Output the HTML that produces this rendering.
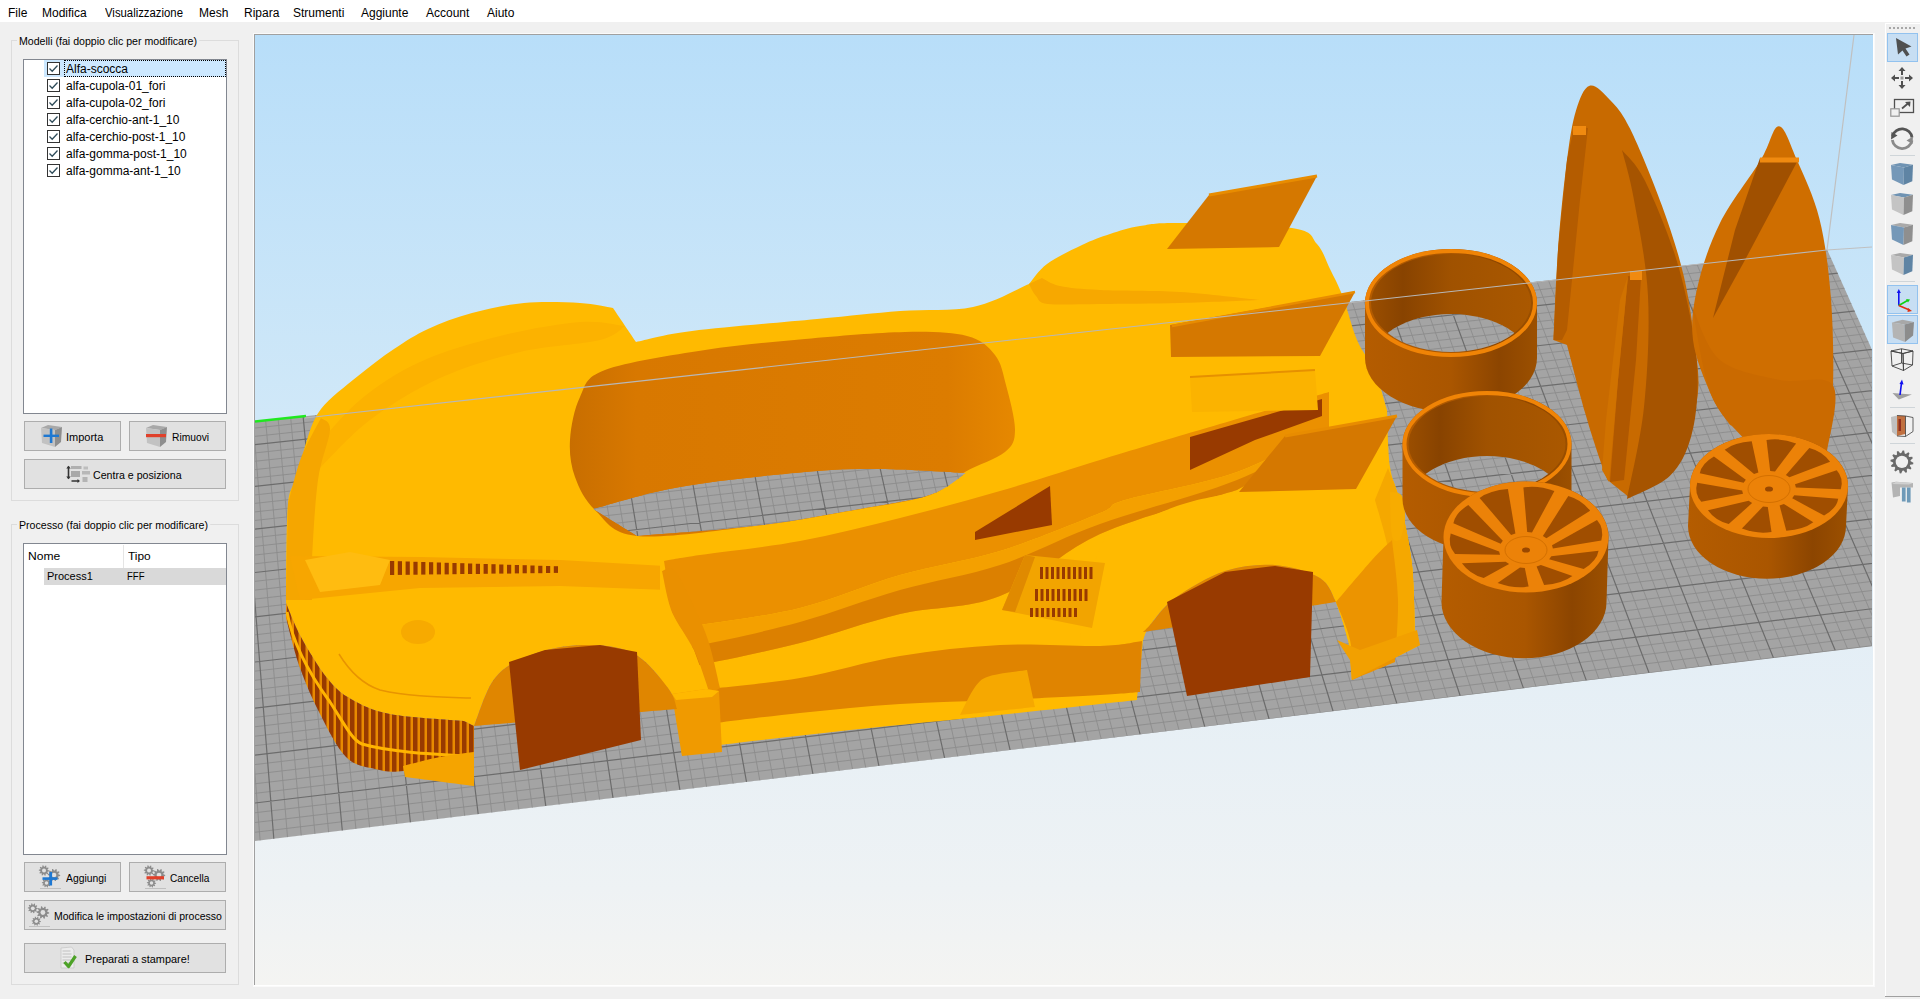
<!DOCTYPE html>
<html><head><meta charset="utf-8">
<style>
*{box-sizing:border-box}
html,body{margin:0;padding:0}
body{width:1920px;height:999px;overflow:hidden;background:#f0f0f0;position:relative;font-family:"Liberation Sans",sans-serif;font-size:12px;color:#000}
.a{position:absolute}
.t{position:absolute;white-space:nowrap;line-height:14px;transform-origin:0 0}
#menu{left:0;top:0;width:1920px;height:22px;background:#fff}
.grp{position:absolute;border:1px solid #dcdcdc}
.lbl{position:absolute;background:#f0f0f0;padding:0 2px;white-space:nowrap;line-height:14px;transform-origin:0 50%}
.lst{position:absolute;background:#fff;border:1px solid #828790}
.btn{position:absolute;background:#e1e1e1;border:1px solid #adadad}
.cb{position:absolute;width:13px;height:13px;border:1px solid #333;background:#fff}
.cb svg{position:absolute;left:0;top:0}
.tb{position:absolute;left:1887px;width:31px;height:29px}
.tbsel{background:#c7def3;border:1px solid #92c2ef}
</style></head><body>
<div id="menu" class="a">
<span class="t" style="left:8px;top:6px">File</span>
<span class="t" style="left:42px;top:6px">Modifica</span>
<span class="t" style="left:105px;top:6px;transform:scaleX(0.945)">Visualizzazione</span>
<span class="t" style="left:199px;top:6px">Mesh</span>
<span class="t" style="left:244px;top:6px">Ripara</span>
<span class="t" style="left:293px;top:6px">Strumenti</span>
<span class="t" style="left:361px;top:6px">Aggiunte</span>
<span class="t" style="left:426px;top:6px">Account</span>
<span class="t" style="left:487px;top:6px">Aiuto</span>
</div>

<!-- group 1 -->
<div class="grp" style="left:11px;top:40px;width:228px;height:461px"></div>
<div class="lbl" style="left:17px;top:34px;font-size:11px;transform:scaleX(0.964)">Modelli (fai doppio clic per modificare)</div>
<div class="lst" style="left:23px;top:59px;width:204px;height:355px">
  <div class="a" style="left:20px;top:0px;width:182px;height:17px;background:#cce8ff"></div>
  <div class="a" style="left:40px;top:0px;width:162px;height:17px;border:1px dotted #000"></div>
</div>
<div class="cb" style="left:47px;top:62px"><svg width="11" height="11"><path d="M1.5 5.5L4.2 8.2L9.5 2.5" stroke="#2f4c5a" stroke-width="1.3" fill="none"/></svg></div>
<span class="t" style="left:66px;top:62px">Alfa-scocca</span>
<div class="cb" style="left:47px;top:79px"><svg width="11" height="11"><path d="M1.5 5.5L4.2 8.2L9.5 2.5" stroke="#2f4c5a" stroke-width="1.3" fill="none"/></svg></div>
<span class="t" style="left:66px;top:79px">alfa-cupola-01_fori</span>
<div class="cb" style="left:47px;top:96px"><svg width="11" height="11"><path d="M1.5 5.5L4.2 8.2L9.5 2.5" stroke="#2f4c5a" stroke-width="1.3" fill="none"/></svg></div>
<span class="t" style="left:66px;top:96px">alfa-cupola-02_fori</span>
<div class="cb" style="left:47px;top:113px"><svg width="11" height="11"><path d="M1.5 5.5L4.2 8.2L9.5 2.5" stroke="#2f4c5a" stroke-width="1.3" fill="none"/></svg></div>
<span class="t" style="left:66px;top:113px">alfa-cerchio-ant-1_10</span>
<div class="cb" style="left:47px;top:130px"><svg width="11" height="11"><path d="M1.5 5.5L4.2 8.2L9.5 2.5" stroke="#2f4c5a" stroke-width="1.3" fill="none"/></svg></div>
<span class="t" style="left:66px;top:130px">alfa-cerchio-post-1_10</span>
<div class="cb" style="left:47px;top:147px"><svg width="11" height="11"><path d="M1.5 5.5L4.2 8.2L9.5 2.5" stroke="#2f4c5a" stroke-width="1.3" fill="none"/></svg></div>
<span class="t" style="left:66px;top:147px">alfa-gomma-post-1_10</span>
<div class="cb" style="left:47px;top:164px"><svg width="11" height="11"><path d="M1.5 5.5L4.2 8.2L9.5 2.5" stroke="#2f4c5a" stroke-width="1.3" fill="none"/></svg></div>
<span class="t" style="left:66px;top:164px">alfa-gomma-ant-1_10</span>
<div class="btn" style="left:24px;top:421px;width:97px;height:30px"></div>
<div class="btn" style="left:129px;top:421px;width:97px;height:30px"></div>
<div class="btn" style="left:24px;top:459px;width:202px;height:30px"></div>
<span class="t" style="left:66px;top:430px;font-size:11px">Importa</span>
<span class="t" style="left:172px;top:430px;font-size:11px;transform:scaleX(0.934)">Rimuovi</span>
<span class="t" style="left:93px;top:468px;font-size:11px;transform:scaleX(0.966)">Centra e posiziona</span>
<svg class="a" style="left:38px;top:424px" width="26" height="26" viewBox="38 424 26 26"><polygon points="41,428 48,425 62,427 55,430" fill="#a8a8a8"/><polygon points="41,428 55,430 55,447 42,443" fill="#c2c2c2"/><polygon points="55,430 62,427 61,442 55,447" fill="#8e8e8e"/><rect x="49.8" y="428.5" width="2.6" height="14.5" fill="#1e78d2"/><rect x="43.5" y="434.6" width="15.5" height="2.4" fill="#1e78d2"/></svg>
<svg class="a" style="left:143px;top:424px" width="26" height="26" viewBox="143 424 26 26"><polygon points="146,428 153,425 167,427 160,430" fill="#a8a8a8"/><polygon points="146,428 160,430 160,447 147,443" fill="#c2c2c2"/><polygon points="160,430 167,427 166,442 160,447" fill="#8e8e8e"/><rect x="146" y="434" width="20" height="3.2" fill="#e0402a"/></svg>
<svg class="a" style="left:66px;top:465px" width="26" height="20" viewBox="66 465 26 20"><path d="M68.5 466.5L68.5 478.5" stroke="#333" stroke-width="1.6"/><path d="M66.3 468.5L68.5 465.8L70.7 468.5ZM66.3 476.5L68.5 479.2L70.7 476.5Z" fill="#333"/><rect x="71" y="466" width="10.5" height="3" fill="#b0b0b0"/><rect x="83.5" y="466.5" width="4.5" height="3" fill="#bdbdbd"/><rect x="71" y="471" width="9" height="6" fill="#a8a8a8"/><rect x="82" y="471" width="8" height="3.5" fill="#b8b8b8"/><rect x="82.5" y="477" width="5" height="5" fill="#b4b4b4"/><path d="M71.5 481L78 481" stroke="#333" stroke-width="1.5"/><path d="M77.5 479L80 481L77.5 483Z" fill="#333"/></svg>

<!-- group 2 -->
<div class="grp" style="left:11px;top:524px;width:228px;height:461px"></div>
<div class="lbl" style="left:17px;top:518px;font-size:11px;transform:scaleX(0.966)">Processo (fai doppio clic per modificare)</div>
<div class="lst" style="left:23px;top:543px;width:204px;height:312px">
  <div class="a" style="left:99px;top:1px;width:1px;height:23px;background:#e5e5e5"></div>
  <div class="a" style="left:20px;top:24px;width:182px;height:17px;background:#d9d9d9"></div>
</div>
<span class="t" style="left:28px;top:549px;font-size:11px;transform:scaleX(1.1)">Nome</span>
<span class="t" style="left:128px;top:549px;font-size:11px;transform:scaleX(1.08)">Tipo</span>
<span class="t" style="left:47px;top:569px;font-size:11px">Process1</span>
<span class="t" style="left:127px;top:569px;font-size:11px;transform:scaleX(0.87)">FFF</span>
<div class="btn" style="left:24px;top:862px;width:97px;height:30px"></div>
<div class="btn" style="left:129px;top:862px;width:97px;height:30px"></div>
<div class="btn" style="left:24px;top:900px;width:202px;height:30px"></div>
<div class="btn" style="left:24px;top:943px;width:202px;height:30px"></div>
<span class="t" style="left:66px;top:871px;font-size:11px;transform:scaleX(0.94)">Aggiungi</span>
<span class="t" style="left:170px;top:871px;font-size:11px;transform:scaleX(0.92)">Cancella</span>
<span class="t" style="left:54px;top:909px;font-size:11px;transform:scaleX(0.953)">Modifica le impostazioni di processo</span>
<span class="t" style="left:85px;top:952px;font-size:11px;transform:scaleX(0.99)">Preparati a stampare!</span>
<svg class="a" style="left:38px;top:864px" width="26" height="26" viewBox="38 864 26 26"><polygon points="49.20,870.50 49.14,871.31 47.56,871.66 47.34,872.20 48.21,873.56 47.68,874.18 46.20,873.53 45.70,873.84 45.61,875.45 44.81,875.64 44.00,874.24 43.41,874.20 42.39,875.45 41.64,875.13 41.80,873.53 41.35,873.15 39.79,873.56 39.37,872.86 40.44,871.66 40.30,871.09 38.80,870.50 38.86,869.69 40.44,869.34 40.66,868.80 39.79,867.44 40.32,866.82 41.80,867.47 42.30,867.16 42.39,865.55 43.19,865.36 44.00,866.76 44.59,866.80 45.61,865.55 46.36,865.87 46.20,867.47 46.65,867.85 48.21,867.44 48.63,868.14 47.56,869.34 47.70,869.91" fill="#8c8c8c"/><circle cx="44" cy="870.5" r="1.98" fill="#e1e1e1"/><polygon points="60.20,875.00 60.12,875.97 58.25,876.38 57.98,877.03 59.02,878.64 58.38,879.38 56.62,878.61 56.03,878.98 55.92,880.90 54.97,881.12 54.00,879.46 53.30,879.41 52.08,880.90 51.19,880.52 51.38,878.61 50.84,878.16 48.98,878.64 48.48,877.81 49.75,876.38 49.59,875.70 47.80,875.00 47.88,874.03 49.75,873.62 50.02,872.97 48.98,871.36 49.62,870.62 51.38,871.39 51.97,871.02 52.08,869.10 53.03,868.88 54.00,870.54 54.70,870.59 55.92,869.10 56.81,869.48 56.62,871.39 57.16,871.84 59.02,871.36 59.52,872.19 58.25,873.62 58.41,874.30" fill="#8c8c8c"/><circle cx="54" cy="875" r="2.36" fill="#e1e1e1"/><polygon points="51.10,883.00 51.04,883.72 49.65,884.02 49.45,884.50 50.22,885.70 49.75,886.25 48.45,885.68 48.00,885.95 47.92,887.37 47.22,887.54 46.50,886.31 45.98,886.27 45.08,887.37 44.41,887.10 44.55,885.68 44.16,885.34 42.78,885.70 42.40,885.09 43.35,884.02 43.23,883.52 41.90,883.00 41.96,882.28 43.35,881.98 43.55,881.50 42.78,880.30 43.25,879.75 44.55,880.32 45.00,880.05 45.08,878.63 45.78,878.46 46.50,879.69 47.02,879.73 47.92,878.63 48.59,878.90 48.45,880.32 48.84,880.66 50.22,880.30 50.60,880.91 49.65,881.98 49.77,882.48" fill="#8c8c8c"/><circle cx="46.5" cy="883" r="1.75" fill="#e1e1e1"/><path d="M40 888.5L61 888.5" stroke="#b8b8b8" stroke-width="0.8"/><rect x="49.3" y="872" width="2.8" height="13.5" fill="#1e78d2"/><rect x="42.5" y="877.3" width="15" height="2.6" fill="#1e78d2"/></svg>
<svg class="a" style="left:143px;top:864px" width="26" height="26" viewBox="143 864 26 26"><polygon points="154.20,870.50 154.14,871.31 152.56,871.66 152.34,872.20 153.21,873.56 152.68,874.18 151.20,873.53 150.70,873.84 150.61,875.45 149.81,875.64 149.00,874.24 148.41,874.20 147.39,875.45 146.64,875.13 146.80,873.53 146.35,873.15 144.79,873.56 144.37,872.86 145.44,871.66 145.30,871.09 143.80,870.50 143.86,869.69 145.44,869.34 145.66,868.80 144.79,867.44 145.32,866.82 146.80,867.47 147.30,867.16 147.39,865.55 148.19,865.36 149.00,866.76 149.59,866.80 150.61,865.55 151.36,865.87 151.20,867.47 151.65,867.85 153.21,867.44 153.63,868.14 152.56,869.34 152.70,869.91" fill="#8c8c8c"/><circle cx="149" cy="870.5" r="1.98" fill="#e1e1e1"/><polygon points="165.20,875.00 165.12,875.97 163.25,876.38 162.98,877.03 164.02,878.64 163.38,879.38 161.62,878.61 161.03,878.98 160.92,880.90 159.97,881.12 159.00,879.46 158.30,879.41 157.08,880.90 156.19,880.52 156.38,878.61 155.84,878.16 153.98,878.64 153.48,877.81 154.75,876.38 154.59,875.70 152.80,875.00 152.88,874.03 154.75,873.62 155.02,872.97 153.98,871.36 154.62,870.62 156.38,871.39 156.97,871.02 157.08,869.10 158.03,868.88 159.00,870.54 159.70,870.59 160.92,869.10 161.81,869.48 161.62,871.39 162.16,871.84 164.02,871.36 164.52,872.19 163.25,873.62 163.41,874.30" fill="#8c8c8c"/><circle cx="159" cy="875" r="2.36" fill="#e1e1e1"/><polygon points="156.10,883.00 156.04,883.72 154.65,884.02 154.45,884.50 155.22,885.70 154.75,886.25 153.45,885.68 153.00,885.95 152.92,887.37 152.22,887.54 151.50,886.31 150.98,886.27 150.08,887.37 149.41,887.10 149.55,885.68 149.16,885.34 147.78,885.70 147.40,885.09 148.35,884.02 148.23,883.52 146.90,883.00 146.96,882.28 148.35,881.98 148.55,881.50 147.78,880.30 148.25,879.75 149.55,880.32 150.00,880.05 150.08,878.63 150.78,878.46 151.50,879.69 152.02,879.73 152.92,878.63 153.59,878.90 153.45,880.32 153.84,880.66 155.22,880.30 155.60,880.91 154.65,881.98 154.77,882.48" fill="#8c8c8c"/><circle cx="151.5" cy="883" r="1.75" fill="#e1e1e1"/><path d="M145 888.5L166 888.5" stroke="#b8b8b8" stroke-width="0.8"/><rect x="146.5" y="876.2" width="17.5" height="3.2" fill="#e0402a"/></svg>
<svg class="a" style="left:27px;top:902px" width="26" height="26" viewBox="27 902 26 26"><polygon points="37.80,908.30 37.74,909.08 36.22,909.41 36.01,909.93 36.85,911.24 36.34,911.84 34.92,911.21 34.43,911.51 34.35,913.06 33.58,913.24 32.80,911.90 32.24,911.86 31.25,913.06 30.53,912.76 30.68,911.21 30.25,910.85 28.75,911.24 28.34,910.57 29.38,909.41 29.24,908.86 27.80,908.30 27.86,907.52 29.38,907.19 29.59,906.67 28.75,905.36 29.26,904.76 30.68,905.39 31.17,905.09 31.25,903.54 32.02,903.36 32.80,904.70 33.36,904.74 34.35,903.54 35.07,903.84 34.92,905.39 35.35,905.75 36.85,905.36 37.26,906.03 36.22,907.19 36.36,907.74" fill="#8c8c8c"/><circle cx="32.8" cy="908.3" r="1.90" fill="#e1e1e1"/><polygon points="49.20,912.50 49.12,913.49 47.21,913.90 46.94,914.56 48.00,916.20 47.35,916.95 45.57,916.17 44.96,916.54 44.85,918.49 43.89,918.72 42.90,917.04 42.19,916.98 40.95,918.49 40.04,918.11 40.23,916.17 39.69,915.71 37.80,916.20 37.29,915.36 38.59,913.90 38.42,913.21 36.60,912.50 36.68,911.51 38.59,911.10 38.86,910.44 37.80,908.80 38.45,908.05 40.23,908.83 40.84,908.46 40.95,906.51 41.91,906.28 42.90,907.96 43.61,908.02 44.85,906.51 45.76,906.89 45.57,908.83 46.11,909.29 48.00,908.80 48.51,909.64 47.21,911.10 47.38,911.79" fill="#8c8c8c"/><circle cx="42.9" cy="912.5" r="2.39" fill="#e1e1e1"/><polygon points="40.90,921.20 40.84,921.92 39.45,922.22 39.25,922.70 40.02,923.90 39.55,924.45 38.25,923.88 37.80,924.15 37.72,925.57 37.02,925.74 36.30,924.51 35.78,924.47 34.88,925.57 34.21,925.30 34.35,923.88 33.96,923.54 32.58,923.90 32.20,923.29 33.15,922.22 33.03,921.72 31.70,921.20 31.76,920.48 33.15,920.18 33.35,919.70 32.58,918.50 33.05,917.95 34.35,918.52 34.80,918.25 34.88,916.83 35.58,916.66 36.30,917.89 36.82,917.93 37.72,916.83 38.39,917.10 38.25,918.52 38.64,918.86 40.02,918.50 40.40,919.11 39.45,920.18 39.57,920.68" fill="#8c8c8c"/><circle cx="36.3" cy="921.2" r="1.75" fill="#e1e1e1"/><path d="M29 926.5L50 926.5" stroke="#b8b8b8" stroke-width="0.8"/></svg>
<svg class="a" style="left:58px;top:944px" width="26" height="28" viewBox="58 944 26 28"><path d="M61 948L71.5 947L74 950L74 968L61 968Z" fill="#ececec" stroke="#c8c8c8" stroke-width="0.8"/><path d="M62.5 951h8M62.5 954h9M62.5 957h9M62.5 960h9M62.5 963h7" stroke="#c0c0c0" stroke-width="1"/><path d="M64.5 962L68.5 966.5L75.5 956" stroke="#4da228" stroke-width="3.2" fill="none" stroke-linejoin="round"/></svg>

<!-- viewport -->
<div class="a" style="left:253px;top:33px;width:1622px;height:954px;background:#fafafa"></div>
<div class="a" style="left:254px;top:34px;width:1620px;height:952px;background:#fff"></div>
<div class="a" style="left:254px;top:34px;width:1619px;height:951px;background:#a0a0a0"></div>
<svg class="a" style="left:255px;top:35px" width="1618" height="950" viewBox="255 35 1618 950">
<defs>
<linearGradient id="sky" x1="0" y1="35" x2="0" y2="984" gradientUnits="userSpaceOnUse">
<stop offset="0" stop-color="#b8def9"/>
<stop offset="0.40" stop-color="#d0e8f8"/>
<stop offset="0.62" stop-color="#e3eef6"/>
<stop offset="0.9" stop-color="#eef2f4"/>
<stop offset="1" stop-color="#f4f4f2"/>
</linearGradient>
<clipPath id="plat"><path d="M255 421.7L1827.2 249.8L1872 349.7L1872 646.2L255 841Z"/></clipPath>
<linearGradient id="cyl" x1="0" y1="0" x2="1" y2="0">
<stop offset="0" stop-color="#b45c00"/><stop offset="0.5" stop-color="#aa5600"/><stop offset="0.78" stop-color="#8c4500"/><stop offset="1" stop-color="#9c5000"/>
</linearGradient>
<linearGradient id="cylin" x1="0" y1="0" x2="1" y2="0">
<stop offset="0" stop-color="#9a4e00"/><stop offset="0.2" stop-color="#884300"/><stop offset="0.5" stop-color="#a05200"/><stop offset="1" stop-color="#aa5800"/>
</linearGradient>
<linearGradient id="cockpit" x1="570" y1="0" x2="1015" y2="0" gradientUnits="userSpaceOnUse">
<stop offset="0" stop-color="#c86e00"/><stop offset="0.15" stop-color="#d87800"/><stop offset="0.85" stop-color="#dc7c00"/><stop offset="1" stop-color="#e68800"/>
</linearGradient>
</defs>
<rect x="255" y="35" width="1618" height="950" fill="url(#sky)"/>
<path d="M255 421.7L1827.2 249.8L1872 349.7L1872 646.2L255 841Z" fill="#a4a4a4"/>
<g clip-path="url(#plat)" fill="none"><path d="M218.9 846.5L189.6 418.7M232.7 844.8L202.1 417.3M246.5 843.2L214.7 416.0M260.2 841.5L227.2 414.6M287.6 838.2L252.3 412.0M301.3 836.5L264.8 410.6M315.0 834.8L277.3 409.3M328.7 833.2L289.8 407.9M356.0 829.8L314.7 405.3M369.7 828.2L327.2 403.9M383.3 826.5L339.6 402.6M396.9 824.9L352.0 401.3M424.1 821.6L376.9 398.6M437.7 819.9L389.3 397.3M451.2 818.3L401.7 395.9M464.8 816.6L414.1 394.6M491.9 813.3L438.8 392.0M505.4 811.7L451.2 390.6M518.9 810.1L463.5 389.3M532.4 808.4L475.8 388.0M559.3 805.2L500.5 385.4M572.8 803.5L512.8 384.0M586.2 801.9L525.1 382.7M599.7 800.3L537.3 381.4M626.5 797.0L561.9 378.8M639.9 795.4L574.1 377.5M653.3 793.7L586.4 376.1M666.7 792.1L598.6 374.8M693.4 788.9L623.0 372.2M706.7 787.3L635.2 370.9M720.0 785.6L647.4 369.6M733.3 784.0L659.6 368.3M759.9 780.8L684.0 365.7M773.2 779.2L696.1 364.4M786.5 777.6L708.3 363.1M799.7 776.0L720.4 361.8M826.2 772.7L744.6 359.2M839.4 771.1L756.7 357.9M852.6 769.5L768.8 356.6M865.8 767.9L780.9 355.3M892.2 764.7L805.0 352.7M905.3 763.1L817.1 351.4M918.5 761.5L829.1 350.1M931.6 759.9L841.2 348.8M957.8 756.8L865.2 346.3M970.9 755.2L877.2 345.0M984.0 753.6L889.2 343.7M997.1 752.0L901.2 342.4M1023.2 748.8L925.1 339.8M1036.3 747.2L937.1 338.5M1049.3 745.6L949.0 337.3M1062.3 744.1L961.0 336.0M1088.3 740.9L984.8 333.4M1101.3 739.3L996.7 332.2M1114.3 737.8L1008.6 330.9M1127.2 736.2L1020.5 329.6M1153.1 733.0L1044.3 327.1M1166.0 731.5L1056.1 325.8M1179.0 729.9L1068.0 324.5M1191.9 728.3L1079.8 323.3M1217.6 725.2L1103.5 320.7M1230.5 723.6L1115.3 319.4M1243.4 722.1L1127.1 318.2M1256.2 720.5L1138.9 316.9M1281.9 717.4L1162.4 314.4M1294.7 715.8L1174.2 313.1M1307.5 714.3L1186.0 311.9M1320.3 712.7L1197.7 310.6M1345.8 709.6L1221.2 308.1M1358.6 708.1L1232.9 306.8M1371.3 706.5L1244.6 305.6M1384.1 705.0L1256.3 304.3M1409.5 701.9L1279.7 301.8M1422.2 700.4L1291.3 300.6M1434.9 698.8L1303.0 299.3M1447.6 697.3L1314.6 298.1M1472.9 694.2L1337.9 295.6M1485.6 692.7L1349.5 294.3M1498.2 691.1L1361.2 293.1M1510.8 689.6L1372.8 291.8M1536.0 686.5L1395.9 289.4M1548.6 685.0L1407.5 288.1M1561.2 683.5L1419.1 286.9M1573.8 681.9L1430.6 285.6M1598.9 678.9L1453.7 283.2M1611.4 677.4L1465.3 281.9M1623.9 675.9L1476.8 280.7M1636.4 674.3L1488.3 279.5M1661.4 671.3L1511.3 277.0M1673.9 669.8L1522.8 275.8M1686.4 668.3L1534.3 274.5M1698.9 666.8L1545.7 273.3M1723.7 663.7L1568.6 270.9M1736.2 662.2L1580.1 269.6M1748.6 660.7L1591.5 268.4M1761.0 659.2L1602.9 267.2M1785.8 656.2L1625.8 264.7M1798.2 654.7L1637.2 263.5M1810.5 653.2L1648.5 262.3M1822.9 651.7L1659.9 261.1M1847.5 648.7L1682.6 258.6M1859.9 647.2L1694.0 257.4M1872.2 645.7L1705.3 256.2M1884.5 644.2L1716.7 255.0M1909.0 641.2L1739.3 252.6M1921.3 639.7L1750.6 251.3M1933.6 638.2L1761.9 250.1M1945.8 636.8L1773.2 248.9M1970.3 633.8L1795.7 246.5M1982.5 632.3L1807.0 245.3M1994.7 630.8L1818.3 244.1M2006.9 629.3L1829.5 242.9M205.2 848.2L2019.1 627.9M204.5 838.4L2015.0 619.1M203.9 828.7L2011.0 610.4M203.2 819.0L2007.0 601.7M202.0 799.7L1999.0 584.4M201.3 790.2L1995.0 575.8M200.7 780.6L1991.1 567.2M200.1 771.1L1987.1 558.7M198.9 752.3L1979.3 541.7M198.2 742.9L1975.4 533.3M197.6 733.5L1971.5 524.9M197.0 724.2L1967.6 516.5M195.8 705.7L1959.9 499.8M195.2 696.5L1956.1 491.5M194.6 687.3L1952.3 483.3M194.0 678.2L1948.5 475.1M192.8 660.1L1941.0 458.7M192.2 651.0L1937.2 450.6M191.6 642.1L1933.5 442.5M191.0 633.1L1929.7 434.4M189.8 615.3L1922.3 418.3M189.3 606.5L1918.6 410.3M188.7 597.6L1915.0 402.4M188.1 588.9L1911.3 394.5M187.0 571.4L1904.0 378.7M186.4 562.7L1900.4 370.8M185.8 554.1L1896.8 363.0M185.3 545.4L1893.2 355.2M184.1 528.3L1886.0 339.7M183.6 519.8L1882.5 332.0M183.0 511.3L1878.9 324.4M182.5 502.9L1875.4 316.7M181.3 486.0L1868.4 301.5M180.8 477.7L1864.9 293.9M180.3 469.4L1861.4 286.4M179.7 461.1L1857.9 278.9M178.6 444.6L1851.0 263.9M178.1 436.3L1847.6 256.5M177.5 428.2L1844.1 249.1M177.0 420.0L1840.7 241.7" stroke="#8c8c8c" stroke-width="0.9"/><path d="M205.2 848.2L177.0 420.0M273.9 839.8L239.8 413.3M342.4 831.5L302.2 406.6M410.5 823.2L364.5 399.9M478.3 815.0L426.4 393.3M545.9 806.8L488.2 386.7M613.1 798.6L549.6 380.1M680.0 790.5L610.8 373.5M746.6 782.4L671.8 367.0M813.0 774.4L732.5 360.5M879.0 766.3L793.0 354.0M944.7 758.3L853.2 347.5M1010.2 750.4L913.2 341.1M1075.3 742.5L972.9 334.7M1140.2 734.6L1032.4 328.3M1204.8 726.8L1091.6 322.0M1269.1 719.0L1150.7 315.7M1333.1 711.2L1209.4 309.4M1396.8 703.4L1268.0 303.1M1460.2 695.7L1326.3 296.8M1523.4 688.1L1384.4 290.6M1586.3 680.4L1442.2 284.4M1649.0 672.8L1499.8 278.2M1711.3 665.2L1557.2 272.1M1773.4 657.7L1614.4 266.0M1835.2 650.2L1671.3 259.8M1896.8 642.7L1728.0 253.8M1958.1 635.3L1784.5 247.7M2019.1 627.9L1840.7 241.7M202.6 809.3L2003.0 593.0M199.5 761.7L1983.2 550.2M196.4 714.9L1963.8 508.1M193.4 669.1L1944.7 466.9M190.4 624.2L1926.0 426.3M187.5 580.1L1907.6 386.6M184.7 536.9L1889.6 347.5M181.9 494.4L1871.9 309.1M179.2 452.8L1854.4 271.4" stroke="#6c6c6c" stroke-width="1.2"/></g>
<path d="M1827 250L1854 35M1827 250L1872 247" stroke="#c0c0c0" stroke-width="1.2" fill="none"/>
<path d="M255 421.5L306 416" stroke="#1fe81f" stroke-width="2.5" fill="none"/>
<path fill="#ffba00" d="M286.0 600.0C286.3 584.0 286.0 524.5 288.0 504.0C290.0 483.5 295.0 487.2 298.0 477.0C301.0 466.8 302.2 454.3 306.0 443.0C309.8 431.7 312.3 420.2 321.0 409.0C329.7 397.8 345.8 386.0 358.0 376.0C370.2 366.0 382.3 356.8 394.0 349.0C405.7 341.2 415.0 335.0 428.0 329.0C441.0 323.0 456.0 317.3 472.0 313.0C488.0 308.7 506.0 304.7 524.0 303.0C542.0 301.3 565.2 302.2 580.0 303.0C594.8 303.8 607.5 307.2 613.0 308.0C616.8 313.7 632.2 336.3 636.0 342.0C645.3 340.2 661.8 334.8 692.0 331.0C722.2 327.2 782.3 322.3 817.0 319.0C851.7 315.7 874.0 313.0 900.0 311.0C926.0 309.0 951.5 311.5 973.0 307.0C994.5 302.5 1019.7 287.8 1029.0 284.0C1032.0 280.7 1038.2 270.5 1047.0 264.0C1055.8 257.5 1071.5 250.0 1082.0 245.0C1092.5 240.0 1100.3 237.2 1110.0 234.0C1119.7 230.8 1128.3 227.8 1140.0 226.0C1151.7 224.2 1154.7 222.7 1180.0 223.0C1205.3 223.3 1269.2 224.5 1292.0 228.0C1314.8 231.5 1310.7 237.2 1317.0 244.0C1323.3 250.8 1325.7 260.2 1330.0 269.0C1334.3 277.8 1338.5 285.2 1343.0 297.0C1347.5 308.8 1351.7 327.5 1357.0 340.0C1362.3 352.5 1370.0 360.3 1375.0 372.0C1380.0 383.7 1385.0 403.7 1387.0 410.0C1387.5 419.5 1387.8 451.7 1390.0 467.0C1392.2 482.3 1396.3 485.7 1400.0 502.0C1403.7 518.3 1409.5 542.0 1412.0 565.0C1414.5 588.0 1414.5 627.5 1415.0 640.0C1415.8 640.8 1419.2 644.2 1420.0 645.0C1408.7 650.8 1363.3 674.2 1352.0 680.0C1351.3 673.3 1350.7 653.0 1348.0 640.0C1345.3 627.0 1338.0 608.3 1336.0 602.0C1333.3 598.0 1330.2 584.2 1320.0 578.0C1309.8 571.8 1290.8 566.2 1275.0 565.0C1259.2 563.8 1241.7 565.5 1225.0 571.0C1208.3 576.5 1187.5 589.0 1175.0 598.0C1162.5 607.0 1155.3 618.0 1150.0 625.0C1144.7 632.0 1144.2 637.5 1143.0 640.0C1142.0 650.0 1138.0 690.0 1137.0 700.0C1114.0 702.5 1046.8 710.0 999.0 715.0C951.2 720.0 896.5 725.0 850.0 730.0C803.5 735.0 741.7 742.5 720.0 745.0C713.7 746.7 688.3 753.3 682.0 755.0C681.2 747.3 677.8 716.7 677.0 709.0C675.5 705.5 675.3 697.3 668.0 688.0C660.7 678.7 647.3 660.2 633.0 653.0C618.7 645.8 599.0 644.7 582.0 645.0C565.0 645.3 545.5 649.5 531.0 655.0C516.5 660.5 504.5 666.2 495.0 678.0C485.5 689.8 477.5 718.0 474.0 726.0C472.3 725.2 465.7 721.8 464.0 721.0C451.7 719.8 408.8 717.7 390.0 714.0C371.2 710.3 361.5 705.0 351.0 699.0C340.5 693.0 335.3 688.3 327.0 678.0C318.7 667.7 307.8 649.5 301.0 637.0C294.2 624.5 288.5 608.7 286.0 603.0C286.0 602.5 286.0 600.5 286.0 600.0Z" />
<path fill="#fcb200" d="M312.0 452.0C320.0 443.3 342.0 415.0 360.0 400.0C378.0 385.0 396.7 372.7 420.0 362.0C443.3 351.3 473.3 342.7 500.0 336.0C526.7 329.3 559.2 323.7 580.0 322.0C600.8 320.3 617.5 325.3 625.0 326.0C620.8 328.3 617.5 335.7 600.0 340.0C582.5 344.3 546.7 345.7 520.0 352.0C493.3 358.3 465.0 366.7 440.0 378.0C415.0 389.3 390.3 404.7 370.0 420.0C349.7 435.3 326.7 461.7 318.0 470.0C317.0 467.0 313.0 455.0 312.0 452.0Z" />
<path fill="#f5a600" d="M288.0 504.0C290.2 496.3 295.5 472.3 301.0 458.0C306.5 443.7 317.7 424.7 321.0 418.0C322.5 420.0 330.5 419.7 330.0 430.0C329.5 440.3 321.0 458.3 318.0 480.0C315.0 501.7 313.0 540.0 312.0 560.0C311.0 580.0 312.0 593.3 312.0 600.0C307.7 600.0 290.3 600.0 286.0 600.0C286.3 584.0 287.7 520.0 288.0 504.0Z" />
<path fill="#f7a600" d="M290.0 556.0L420.0 557.0L560.0 560.0L665.0 566.0L668.0 590.0L560.0 586.0L420.0 588.0L300.0 600.0Z" />
<path fill="#ffbc10" d="M305.0 560.0L350.0 552.0L390.0 560.0L380.0 585.0L320.0 592.0Z" />
<rect x="390.0" y="561.0" width="4.2" height="14.0" fill="#983a00"/>
<rect x="397.8" y="561.2" width="4.2" height="13.7" fill="#983a00"/>
<rect x="405.6" y="561.5" width="4.2" height="13.3" fill="#983a00"/>
<rect x="413.4" y="561.8" width="4.2" height="12.9" fill="#983a00"/>
<rect x="421.2" y="562.0" width="4.2" height="12.6" fill="#983a00"/>
<rect x="429.0" y="562.2" width="4.2" height="12.2" fill="#983a00"/>
<rect x="436.8" y="562.5" width="4.2" height="11.9" fill="#983a00"/>
<rect x="444.6" y="562.8" width="4.2" height="11.6" fill="#983a00"/>
<rect x="452.4" y="563.0" width="4.2" height="11.2" fill="#983a00"/>
<rect x="460.2" y="563.2" width="4.2" height="10.8" fill="#983a00"/>
<rect x="468.0" y="563.5" width="4.2" height="10.5" fill="#983a00"/>
<rect x="475.8" y="563.8" width="4.2" height="10.2" fill="#983a00"/>
<rect x="483.6" y="564.0" width="4.2" height="9.8" fill="#983a00"/>
<rect x="491.4" y="564.2" width="4.2" height="9.4" fill="#983a00"/>
<rect x="499.2" y="564.5" width="4.2" height="9.1" fill="#983a00"/>
<rect x="507.0" y="564.8" width="4.2" height="8.8" fill="#983a00"/>
<rect x="514.8" y="565.0" width="4.2" height="8.4" fill="#983a00"/>
<rect x="522.6" y="565.2" width="4.2" height="8.1" fill="#983a00"/>
<rect x="530.4" y="565.5" width="4.2" height="7.7" fill="#983a00"/>
<rect x="538.2" y="565.8" width="4.2" height="7.4" fill="#983a00"/>
<rect x="546.0" y="566.0" width="4.2" height="7.0" fill="#983a00"/>
<rect x="553.8" y="566.2" width="4.2" height="6.7" fill="#983a00"/>
<ellipse cx="418" cy="632" rx="17" ry="12" fill="#f7aa00"/>
<pattern id="stripes" patternUnits="userSpaceOnUse" width="7" height="20"><rect width="7" height="20" fill="#e88a00"/><rect width="4.5" height="20" fill="#983a00"/></pattern>
<path fill="url(#stripes)" d="M286.0 603.0C288.5 608.7 294.2 624.5 301.0 637.0C307.8 649.5 318.7 667.7 327.0 678.0C335.3 688.3 340.5 693.0 351.0 699.0C361.5 705.0 371.2 710.3 390.0 714.0C408.8 717.7 451.7 719.8 464.0 721.0C465.7 721.8 472.3 725.2 474.0 726.0C474.0 731.7 474.0 754.3 474.0 760.0C472.3 759.8 465.7 759.2 464.0 759.0C454.0 761.0 418.8 769.3 404.0 771.0C389.2 772.7 384.7 771.3 375.0 769.0C365.3 766.7 355.2 766.2 346.0 757.0C336.8 747.8 327.7 728.8 320.0 714.0C312.3 699.2 305.7 684.0 300.0 668.0C294.3 652.0 288.3 626.3 286.0 618.0C286.0 615.5 286.0 605.5 286.0 603.0Z" />
<path d="M287 612C292 640 305 668 330 702C345 725 352 740 362 744C390 752 430 754 468 756" stroke="#ffb400" stroke-width="3" fill="none"/>
<path d="M339 654C350 672 362 684 380 690C410 697 440 697 471 698" stroke="#e89400" stroke-width="1.5" fill="none"/>
<path fill="#f5a400" d="M403.0 766.0C409.2 764.5 428.2 759.3 440.0 757.0C451.8 754.7 468.3 752.8 474.0 752.0C474.0 757.7 474.0 780.3 474.0 786.0C462.5 784.5 416.5 778.5 405.0 777.0C404.7 775.2 403.3 767.8 403.0 766.0Z" />
<path fill="url(#cockpit)" d="M605.0 370.0C625.8 362.2 671.7 355.2 705.0 350.0C738.3 344.8 771.7 342.0 805.0 339.0C838.3 336.0 878.0 332.5 905.0 332.0C932.0 331.5 952.0 332.2 967.0 336.0C982.0 339.8 988.5 346.8 995.0 355.0C1001.5 363.2 1002.7 372.5 1006.0 385.0C1009.3 397.5 1015.2 418.8 1015.0 430.0C1014.8 441.2 1013.3 445.0 1005.0 452.0C996.7 459.0 977.5 464.8 965.0 472.0C952.5 479.2 948.3 488.7 930.0 495.0C911.7 501.3 884.2 504.8 855.0 510.0C825.8 515.2 791.3 521.7 755.0 526.0C718.7 530.3 663.7 538.7 637.0 536.0C610.3 533.3 605.3 519.8 595.0 510.0C584.7 500.2 579.2 488.7 575.0 477.0C570.8 465.3 569.2 453.3 570.0 440.0C570.8 426.7 574.2 408.7 580.0 397.0C585.8 385.3 584.2 377.8 605.0 370.0Z" />
<clipPath id="cfloor"><path d="M593.0 509.0C607.5 505.3 644.7 493.2 680.0 487.0C715.3 480.8 771.7 475.0 805.0 472.0C838.3 469.0 853.2 468.8 880.0 469.0C906.8 469.2 951.7 472.3 966.0 473.0C960.0 476.7 948.5 488.8 930.0 495.0C911.5 501.2 884.2 504.8 855.0 510.0C825.8 515.2 791.3 521.7 755.0 526.0C718.7 530.3 656.7 534.3 637.0 536.0C629.7 531.5 600.3 513.5 593.0 509.0Z"/></clipPath>
<g clip-path="url(#cfloor)"><path d="M593.0 509.0C607.5 505.3 644.7 493.2 680.0 487.0C715.3 480.8 771.7 475.0 805.0 472.0C838.3 469.0 853.2 468.8 880.0 469.0C906.8 469.2 951.7 472.3 966.0 473.0C960.0 476.7 948.5 488.8 930.0 495.0C911.5 501.2 884.2 504.8 855.0 510.0C825.8 515.2 791.3 521.7 755.0 526.0C718.7 530.3 656.7 534.3 637.0 536.0C629.7 531.5 600.3 513.5 593.0 509.0Z" fill="#a4a4a4"/><path d="M218.9 846.5L189.6 418.7M232.7 844.8L202.1 417.3M246.5 843.2L214.7 416.0M260.2 841.5L227.2 414.6M287.6 838.2L252.3 412.0M301.3 836.5L264.8 410.6M315.0 834.8L277.3 409.3M328.7 833.2L289.8 407.9M356.0 829.8L314.7 405.3M369.7 828.2L327.2 403.9M383.3 826.5L339.6 402.6M396.9 824.9L352.0 401.3M424.1 821.6L376.9 398.6M437.7 819.9L389.3 397.3M451.2 818.3L401.7 395.9M464.8 816.6L414.1 394.6M491.9 813.3L438.8 392.0M505.4 811.7L451.2 390.6M518.9 810.1L463.5 389.3M532.4 808.4L475.8 388.0M559.3 805.2L500.5 385.4M572.8 803.5L512.8 384.0M586.2 801.9L525.1 382.7M599.7 800.3L537.3 381.4M626.5 797.0L561.9 378.8M639.9 795.4L574.1 377.5M653.3 793.7L586.4 376.1M666.7 792.1L598.6 374.8M693.4 788.9L623.0 372.2M706.7 787.3L635.2 370.9M720.0 785.6L647.4 369.6M733.3 784.0L659.6 368.3M759.9 780.8L684.0 365.7M773.2 779.2L696.1 364.4M786.5 777.6L708.3 363.1M799.7 776.0L720.4 361.8M826.2 772.7L744.6 359.2M839.4 771.1L756.7 357.9M852.6 769.5L768.8 356.6M865.8 767.9L780.9 355.3M892.2 764.7L805.0 352.7M905.3 763.1L817.1 351.4M918.5 761.5L829.1 350.1M931.6 759.9L841.2 348.8M957.8 756.8L865.2 346.3M970.9 755.2L877.2 345.0M984.0 753.6L889.2 343.7M997.1 752.0L901.2 342.4M1023.2 748.8L925.1 339.8M1036.3 747.2L937.1 338.5M1049.3 745.6L949.0 337.3M1062.3 744.1L961.0 336.0M1088.3 740.9L984.8 333.4M1101.3 739.3L996.7 332.2M1114.3 737.8L1008.6 330.9M1127.2 736.2L1020.5 329.6M1153.1 733.0L1044.3 327.1M1166.0 731.5L1056.1 325.8M1179.0 729.9L1068.0 324.5M1191.9 728.3L1079.8 323.3M1217.6 725.2L1103.5 320.7M1230.5 723.6L1115.3 319.4M1243.4 722.1L1127.1 318.2M1256.2 720.5L1138.9 316.9M1281.9 717.4L1162.4 314.4M1294.7 715.8L1174.2 313.1M1307.5 714.3L1186.0 311.9M1320.3 712.7L1197.7 310.6M1345.8 709.6L1221.2 308.1M1358.6 708.1L1232.9 306.8M1371.3 706.5L1244.6 305.6M1384.1 705.0L1256.3 304.3M1409.5 701.9L1279.7 301.8M1422.2 700.4L1291.3 300.6M1434.9 698.8L1303.0 299.3M1447.6 697.3L1314.6 298.1M1472.9 694.2L1337.9 295.6M1485.6 692.7L1349.5 294.3M1498.2 691.1L1361.2 293.1M1510.8 689.6L1372.8 291.8M1536.0 686.5L1395.9 289.4M1548.6 685.0L1407.5 288.1M1561.2 683.5L1419.1 286.9M1573.8 681.9L1430.6 285.6M1598.9 678.9L1453.7 283.2M1611.4 677.4L1465.3 281.9M1623.9 675.9L1476.8 280.7M1636.4 674.3L1488.3 279.5M1661.4 671.3L1511.3 277.0M1673.9 669.8L1522.8 275.8M1686.4 668.3L1534.3 274.5M1698.9 666.8L1545.7 273.3M1723.7 663.7L1568.6 270.9M1736.2 662.2L1580.1 269.6M1748.6 660.7L1591.5 268.4M1761.0 659.2L1602.9 267.2M1785.8 656.2L1625.8 264.7M1798.2 654.7L1637.2 263.5M1810.5 653.2L1648.5 262.3M1822.9 651.7L1659.9 261.1M1847.5 648.7L1682.6 258.6M1859.9 647.2L1694.0 257.4M1872.2 645.7L1705.3 256.2M1884.5 644.2L1716.7 255.0M1909.0 641.2L1739.3 252.6M1921.3 639.7L1750.6 251.3M1933.6 638.2L1761.9 250.1M1945.8 636.8L1773.2 248.9M1970.3 633.8L1795.7 246.5M1982.5 632.3L1807.0 245.3M1994.7 630.8L1818.3 244.1M2006.9 629.3L1829.5 242.9M205.2 848.2L2019.1 627.9M204.5 838.4L2015.0 619.1M203.9 828.7L2011.0 610.4M203.2 819.0L2007.0 601.7M202.0 799.7L1999.0 584.4M201.3 790.2L1995.0 575.8M200.7 780.6L1991.1 567.2M200.1 771.1L1987.1 558.7M198.9 752.3L1979.3 541.7M198.2 742.9L1975.4 533.3M197.6 733.5L1971.5 524.9M197.0 724.2L1967.6 516.5M195.8 705.7L1959.9 499.8M195.2 696.5L1956.1 491.5M194.6 687.3L1952.3 483.3M194.0 678.2L1948.5 475.1M192.8 660.1L1941.0 458.7M192.2 651.0L1937.2 450.6M191.6 642.1L1933.5 442.5M191.0 633.1L1929.7 434.4M189.8 615.3L1922.3 418.3M189.3 606.5L1918.6 410.3M188.7 597.6L1915.0 402.4M188.1 588.9L1911.3 394.5M187.0 571.4L1904.0 378.7M186.4 562.7L1900.4 370.8M185.8 554.1L1896.8 363.0M185.3 545.4L1893.2 355.2M184.1 528.3L1886.0 339.7M183.6 519.8L1882.5 332.0M183.0 511.3L1878.9 324.4M182.5 502.9L1875.4 316.7M181.3 486.0L1868.4 301.5M180.8 477.7L1864.9 293.9M180.3 469.4L1861.4 286.4M179.7 461.1L1857.9 278.9M178.6 444.6L1851.0 263.9M178.1 436.3L1847.6 256.5M177.5 428.2L1844.1 249.1M177.0 420.0L1840.7 241.7" stroke="#8c8c8c" stroke-width="0.9" fill="none"/><path d="M205.2 848.2L177.0 420.0M273.9 839.8L239.8 413.3M342.4 831.5L302.2 406.6M410.5 823.2L364.5 399.9M478.3 815.0L426.4 393.3M545.9 806.8L488.2 386.7M613.1 798.6L549.6 380.1M680.0 790.5L610.8 373.5M746.6 782.4L671.8 367.0M813.0 774.4L732.5 360.5M879.0 766.3L793.0 354.0M944.7 758.3L853.2 347.5M1010.2 750.4L913.2 341.1M1075.3 742.5L972.9 334.7M1140.2 734.6L1032.4 328.3M1204.8 726.8L1091.6 322.0M1269.1 719.0L1150.7 315.7M1333.1 711.2L1209.4 309.4M1396.8 703.4L1268.0 303.1M1460.2 695.7L1326.3 296.8M1523.4 688.1L1384.4 290.6M1586.3 680.4L1442.2 284.4M1649.0 672.8L1499.8 278.2M1711.3 665.2L1557.2 272.1M1773.4 657.7L1614.4 266.0M1835.2 650.2L1671.3 259.8M1896.8 642.7L1728.0 253.8M1958.1 635.3L1784.5 247.7M2019.1 627.9L1840.7 241.7M202.6 809.3L2003.0 593.0M199.5 761.7L1983.2 550.2M196.4 714.9L1963.8 508.1M193.4 669.1L1944.7 466.9M190.4 624.2L1926.0 426.3M187.5 580.1L1907.6 386.6M184.7 536.9L1889.6 347.5M181.9 494.4L1871.9 309.1M179.2 452.8L1854.4 271.4" stroke="#6c6c6c" stroke-width="1.2" fill="none"/></g>
<path fill="#eb9000" d="M664.0 561.0C670.0 560.0 677.3 558.3 700.0 555.0C722.7 551.7 766.7 547.2 800.0 541.0C833.3 534.8 866.7 526.3 900.0 518.0C933.3 509.7 966.7 500.7 1000.0 491.0C1033.3 481.3 1069.0 469.5 1100.0 460.0C1131.0 450.5 1147.8 445.3 1186.0 434.0C1224.2 422.7 1305.2 399.0 1329.0 392.0C1329.0 397.8 1329.0 421.2 1329.0 427.0C1313.7 434.5 1271.0 459.8 1237.0 472.0C1203.0 484.2 1147.8 493.2 1125.0 500.0C1102.2 506.8 1120.8 504.5 1100.0 513.0C1079.2 521.5 1033.3 540.7 1000.0 551.0C966.7 561.3 933.3 565.5 900.0 575.0C866.7 584.5 833.3 599.7 800.0 608.0C766.7 616.3 722.7 621.3 700.0 625.0C677.3 628.7 670.0 629.2 664.0 630.0C664.0 618.5 664.0 572.5 664.0 561.0Z" />
<path fill="#f4a000" d="M664.0 630.0C670.0 629.2 677.3 628.7 700.0 625.0C722.7 621.3 766.7 616.3 800.0 608.0C833.3 599.7 866.7 584.5 900.0 575.0C933.3 565.5 966.7 561.3 1000.0 551.0C1033.3 540.7 1079.2 521.5 1100.0 513.0C1120.8 504.5 1102.2 506.8 1125.0 500.0C1147.8 493.2 1203.0 484.2 1237.0 472.0C1271.0 459.8 1313.7 434.5 1329.0 427.0C1329.0 429.2 1329.0 437.8 1329.0 440.0C1313.7 448.3 1252.3 481.7 1237.0 490.0C1214.2 497.3 1139.5 516.3 1100.0 534.0C1060.5 551.7 1033.3 582.7 1000.0 596.0C966.7 609.3 933.3 606.2 900.0 614.0C866.7 621.8 833.3 634.5 800.0 643.0C766.7 651.5 722.7 660.5 700.0 665.0C677.3 669.5 670.0 669.2 664.0 670.0C664.0 663.3 664.0 636.7 664.0 630.0Z" />
<path fill="#dc8000" d="M664.0 649.0C670.0 648.3 677.3 649.5 700.0 645.0C722.7 640.5 766.7 631.2 800.0 622.0C833.3 612.8 866.7 599.5 900.0 590.0C933.3 580.5 966.7 576.0 1000.0 565.0C1033.3 554.0 1060.5 538.2 1100.0 524.0C1139.5 509.8 1198.8 495.3 1237.0 480.0C1275.2 464.7 1313.7 440.0 1329.0 432.0C1329.0 433.3 1329.0 438.7 1329.0 440.0C1313.7 448.3 1252.3 481.7 1237.0 490.0C1214.2 497.3 1139.5 516.3 1100.0 534.0C1060.5 551.7 1033.3 582.7 1000.0 596.0C966.7 609.3 933.3 606.2 900.0 614.0C866.7 621.8 833.3 634.5 800.0 643.0C766.7 651.5 722.7 660.5 700.0 665.0C677.3 669.5 670.0 669.2 664.0 670.0C664.0 666.5 664.0 652.5 664.0 649.0Z" />
<path fill="#ffba00" d="M1105.0 537.0C1117.5 531.7 1157.7 512.5 1180.0 505.0C1202.3 497.5 1229.2 494.2 1239.0 492.0C1258.5 491.5 1336.5 489.5 1356.0 489.0C1361.3 485.5 1382.7 471.5 1388.0 468.0C1390.0 473.7 1396.0 485.8 1400.0 502.0C1404.0 518.2 1409.5 542.0 1412.0 565.0C1414.5 588.0 1414.5 627.5 1415.0 640.0C1403.8 640.0 1359.2 640.0 1348.0 640.0C1346.0 633.7 1340.7 612.3 1336.0 602.0C1331.3 591.7 1330.2 584.2 1320.0 578.0C1309.8 571.8 1290.8 566.2 1275.0 565.0C1259.2 563.8 1241.7 565.5 1225.0 571.0C1208.3 576.5 1187.5 589.0 1175.0 598.0C1162.5 607.0 1155.3 618.0 1150.0 625.0C1144.7 632.0 1144.2 637.5 1143.0 640.0C1132.5 640.0 1090.5 640.0 1080.0 640.0C1080.8 631.7 1080.8 607.2 1085.0 590.0C1089.2 572.8 1101.7 545.8 1105.0 537.0C1105.0 537.0 1105.0 537.0 1105.0 537.0Z" />
<path fill="#f5a800" d="M1388.0 468.0C1390.0 473.7 1396.0 485.8 1400.0 502.0C1404.0 518.2 1409.5 542.0 1412.0 565.0C1414.5 588.0 1414.5 627.5 1415.0 640.0C1411.7 640.0 1398.3 640.0 1395.0 640.0C1394.2 626.7 1393.3 583.3 1390.0 560.0C1386.7 536.7 1377.5 510.0 1375.0 500.0C1377.2 494.7 1385.8 473.3 1388.0 468.0Z" />
<path fill="#983a00" d="M1190.0 437.0L1322.0 399.0L1322.0 416.0L1255.0 440.0L1190.0 470.0Z" />
<path fill="#983a00" d="M975.0 532.0L1050.0 486.0L1052.0 525.0L975.0 540.0Z" />
<path fill="#e08400" d="M700.0 690.0C716.7 688.0 766.7 683.7 800.0 678.0C833.3 672.3 866.7 661.5 900.0 656.0C933.3 650.5 966.7 646.7 1000.0 645.0C1033.3 643.3 1076.3 646.7 1100.0 646.0C1123.7 645.3 1135.0 641.8 1142.0 641.0C1141.7 649.5 1140.3 683.5 1140.0 692.0C1133.3 692.5 1123.3 693.7 1100.0 695.0C1076.7 696.3 1033.3 698.5 1000.0 700.0C966.7 701.5 933.3 701.8 900.0 704.0C866.7 706.2 833.3 709.5 800.0 713.0C766.7 716.5 716.7 723.0 700.0 725.0C700.0 719.2 700.0 695.8 700.0 690.0Z" />
<path fill="#f6a800" d="M960.0 715.0C962.5 710.3 970.0 693.5 975.0 687.0C980.0 680.5 981.3 678.8 990.0 676.0C998.7 673.2 1020.8 671.0 1027.0 670.0C1028.3 676.2 1033.7 700.8 1035.0 707.0C1022.5 708.3 972.5 713.7 960.0 715.0Z" />
<path fill="#ffba00" d="M660.0 556.0L664.0 561.0L672.0 612.0L694.0 650.0L710.0 694.0L676.0 700.0L668.0 688.0L660.0 680.0Z" />
<path fill="#ea9000" d="M662.0 571.0C664.0 570.8 669.3 565.5 674.0 570.0C678.7 574.5 684.3 586.3 690.0 598.0C695.7 609.7 703.0 625.0 708.0 640.0C713.0 655.0 718.0 680.0 720.0 688.0C718.3 689.0 711.7 693.0 710.0 694.0C707.3 686.7 700.3 663.7 694.0 650.0C687.7 636.3 677.3 625.2 672.0 612.0C666.7 598.8 663.7 577.8 662.0 571.0Z" />
<path fill="#f09a00" d="M672.0 694.0L706.0 689.0L719.0 691.0L722.0 752.0L682.0 756.0L676.0 720.0Z" />
<path fill="#ffb800" d="M672.0 694.0L706.0 689.0L719.0 691.0L712.0 697.0L676.0 700.0Z" />
<path fill="#f2a400" d="M1002.0 610.0L1025.0 555.0L1105.0 563.0L1092.0 628.0Z" />
<path fill="#e08a00" d="M1002.0 610.0L1025.0 555.0L1035.0 557.0L1015.0 612.0Z" />
<rect x="1040.0" y="567" width="3" height="12" fill="#983a00"/>
<rect x="1045.5" y="567" width="3" height="12" fill="#983a00"/>
<rect x="1051.0" y="567" width="3" height="12" fill="#983a00"/>
<rect x="1056.5" y="567" width="3" height="12" fill="#983a00"/>
<rect x="1062.0" y="567" width="3" height="12" fill="#983a00"/>
<rect x="1067.5" y="567" width="3" height="12" fill="#983a00"/>
<rect x="1073.0" y="567" width="3" height="12" fill="#983a00"/>
<rect x="1078.5" y="567" width="3" height="12" fill="#983a00"/>
<rect x="1084.0" y="567" width="3" height="12" fill="#983a00"/>
<rect x="1089.5" y="567" width="3" height="12" fill="#983a00"/>
<rect x="1035.0" y="589" width="3" height="12" fill="#983a00"/>
<rect x="1040.5" y="589" width="3" height="12" fill="#983a00"/>
<rect x="1046.0" y="589" width="3" height="12" fill="#983a00"/>
<rect x="1051.5" y="589" width="3" height="12" fill="#983a00"/>
<rect x="1057.0" y="589" width="3" height="12" fill="#983a00"/>
<rect x="1062.5" y="589" width="3" height="12" fill="#983a00"/>
<rect x="1068.0" y="589" width="3" height="12" fill="#983a00"/>
<rect x="1073.5" y="589" width="3" height="12" fill="#983a00"/>
<rect x="1079.0" y="589" width="3" height="12" fill="#983a00"/>
<rect x="1084.5" y="589" width="3" height="12" fill="#983a00"/>
<rect x="1030.0" y="608" width="3" height="9" fill="#983a00"/>
<rect x="1035.5" y="608" width="3" height="9" fill="#983a00"/>
<rect x="1041.0" y="608" width="3" height="9" fill="#983a00"/>
<rect x="1046.5" y="608" width="3" height="9" fill="#983a00"/>
<rect x="1052.0" y="608" width="3" height="9" fill="#983a00"/>
<rect x="1057.5" y="608" width="3" height="9" fill="#983a00"/>
<rect x="1063.0" y="608" width="3" height="9" fill="#983a00"/>
<rect x="1068.5" y="608" width="3" height="9" fill="#983a00"/>
<rect x="1074.0" y="608" width="3" height="9" fill="#983a00"/>
<path fill="#f7a800" d="M1029.0 284.0C1030.2 286.0 1032.8 292.7 1036.0 296.0C1039.2 299.3 1037.3 302.7 1048.0 304.0C1058.7 305.3 1078.0 304.2 1100.0 304.0C1122.0 303.8 1153.3 303.7 1180.0 303.0C1206.7 302.3 1246.7 300.5 1260.0 300.0C1246.7 298.7 1206.7 293.7 1180.0 292.0C1153.3 290.3 1120.0 291.0 1100.0 290.0C1080.0 289.0 1069.7 288.0 1060.0 286.0C1050.3 284.0 1045.0 279.3 1042.0 278.0C1039.8 279.0 1031.2 283.0 1029.0 284.0Z" />
<path fill="#fbb300" d="M1190.0 377.0L1315.0 370.0L1318.0 410.0L1192.0 412.0Z" />
<path d="M1190 377L1315 370" stroke="#e69000" stroke-width="2"/>
<path fill="#d57800" d="M1167.0 249.0L1209.0 195.0L1317.0 176.0L1279.0 247.0Z" />
<path d="M1209 195L1317 176" stroke="#e88c00" stroke-width="3"/>
<path fill="#d57800" d="M1170.0 325.0L1355.0 292.0L1320.0 356.0L1171.0 357.0Z" />
<path d="M1172 326L1355 292" stroke="#e88c00" stroke-width="2.5"/>
<path fill="#d57800" d="M1239.0 492.0L1285.0 436.0L1397.0 416.0L1356.0 489.0Z" />
<path d="M1285 436L1397 416" stroke="#e88c00" stroke-width="3"/>
<path fill="#ec9400" d="M1336.0 602.0C1338.3 608.3 1347.3 627.0 1350.0 640.0C1352.7 653.0 1351.7 673.3 1352.0 680.0C1359.2 677.0 1387.8 665.0 1395.0 662.0C1395.5 651.7 1398.5 620.3 1398.0 600.0C1397.5 579.7 1393.0 550.0 1392.0 540.0C1388.7 543.3 1381.3 549.7 1372.0 560.0C1362.7 570.3 1342.0 595.0 1336.0 602.0Z" />
<path fill="#f7ac00" d="M1390.0 492.0C1392.0 492.7 1399.5 491.3 1402.0 496.0C1404.5 500.7 1405.3 512.7 1405.0 520.0C1404.7 527.3 1400.8 536.7 1400.0 540.0C1398.7 539.3 1393.7 544.0 1392.0 536.0C1390.3 528.0 1390.3 499.3 1390.0 492.0Z" />
<path fill="#e08600" d="M474.0 726.0C477.5 718.0 485.5 689.8 495.0 678.0C504.5 666.2 516.5 660.5 531.0 655.0C545.5 649.5 565.0 645.3 582.0 645.0C599.0 644.7 618.7 645.8 633.0 653.0C647.3 660.2 660.7 678.7 668.0 688.0C675.3 697.3 675.5 705.5 677.0 709.0C643.2 711.8 507.8 723.2 474.0 726.0Z" />
<path fill="#e08600" d="M1143.0 632.0C1144.2 630.8 1144.7 630.7 1150.0 625.0C1155.3 619.3 1162.5 607.0 1175.0 598.0C1187.5 589.0 1208.3 576.5 1225.0 571.0C1241.7 565.5 1259.2 563.8 1275.0 565.0C1290.8 566.2 1309.8 571.8 1320.0 578.0C1330.2 584.2 1333.3 598.0 1336.0 602.0C1303.8 607.0 1175.2 627.0 1143.0 632.0Z" />
<path fill="#983a00" d="M509.0 662.0L545.0 650.0L600.0 645.0L637.0 652.0L641.0 740.0L520.0 770.0Z" />
<path fill="#983a00" d="M1167.0 602.0L1225.0 572.0L1275.0 566.0L1313.0 572.0L1310.0 677.0L1187.0 696.0Z" />
<path fill="#f2a000" d="M1337.0 640.0L1350.0 660.0L1352.0 680.0L1420.0 645.0L1417.0 630.0L1360.0 650.0Z" />
<path fill="url(#cyl)" d="M1365 303A86 54 0 0 1 1537 303L1537 358A86 54 0 0 1 1365 358Z"/>
<ellipse cx="1451" cy="303" rx="80" ry="49" fill="url(#cylin)"/>
<clipPath id="rc1451"><ellipse cx="1451" cy="303" rx="80" ry="49"/></clipPath>
<g clip-path="url(#rc1451)"><clipPath id="rc1451b"><ellipse cx="1451" cy="363" rx="80" ry="49"/></clipPath><g clip-path="url(#rc1451b)"><rect x="1365" y="249" width="172" height="168" fill="#a4a4a4"/><path d="M218.9 846.5L189.6 418.7M232.7 844.8L202.1 417.3M246.5 843.2L214.7 416.0M260.2 841.5L227.2 414.6M287.6 838.2L252.3 412.0M301.3 836.5L264.8 410.6M315.0 834.8L277.3 409.3M328.7 833.2L289.8 407.9M356.0 829.8L314.7 405.3M369.7 828.2L327.2 403.9M383.3 826.5L339.6 402.6M396.9 824.9L352.0 401.3M424.1 821.6L376.9 398.6M437.7 819.9L389.3 397.3M451.2 818.3L401.7 395.9M464.8 816.6L414.1 394.6M491.9 813.3L438.8 392.0M505.4 811.7L451.2 390.6M518.9 810.1L463.5 389.3M532.4 808.4L475.8 388.0M559.3 805.2L500.5 385.4M572.8 803.5L512.8 384.0M586.2 801.9L525.1 382.7M599.7 800.3L537.3 381.4M626.5 797.0L561.9 378.8M639.9 795.4L574.1 377.5M653.3 793.7L586.4 376.1M666.7 792.1L598.6 374.8M693.4 788.9L623.0 372.2M706.7 787.3L635.2 370.9M720.0 785.6L647.4 369.6M733.3 784.0L659.6 368.3M759.9 780.8L684.0 365.7M773.2 779.2L696.1 364.4M786.5 777.6L708.3 363.1M799.7 776.0L720.4 361.8M826.2 772.7L744.6 359.2M839.4 771.1L756.7 357.9M852.6 769.5L768.8 356.6M865.8 767.9L780.9 355.3M892.2 764.7L805.0 352.7M905.3 763.1L817.1 351.4M918.5 761.5L829.1 350.1M931.6 759.9L841.2 348.8M957.8 756.8L865.2 346.3M970.9 755.2L877.2 345.0M984.0 753.6L889.2 343.7M997.1 752.0L901.2 342.4M1023.2 748.8L925.1 339.8M1036.3 747.2L937.1 338.5M1049.3 745.6L949.0 337.3M1062.3 744.1L961.0 336.0M1088.3 740.9L984.8 333.4M1101.3 739.3L996.7 332.2M1114.3 737.8L1008.6 330.9M1127.2 736.2L1020.5 329.6M1153.1 733.0L1044.3 327.1M1166.0 731.5L1056.1 325.8M1179.0 729.9L1068.0 324.5M1191.9 728.3L1079.8 323.3M1217.6 725.2L1103.5 320.7M1230.5 723.6L1115.3 319.4M1243.4 722.1L1127.1 318.2M1256.2 720.5L1138.9 316.9M1281.9 717.4L1162.4 314.4M1294.7 715.8L1174.2 313.1M1307.5 714.3L1186.0 311.9M1320.3 712.7L1197.7 310.6M1345.8 709.6L1221.2 308.1M1358.6 708.1L1232.9 306.8M1371.3 706.5L1244.6 305.6M1384.1 705.0L1256.3 304.3M1409.5 701.9L1279.7 301.8M1422.2 700.4L1291.3 300.6M1434.9 698.8L1303.0 299.3M1447.6 697.3L1314.6 298.1M1472.9 694.2L1337.9 295.6M1485.6 692.7L1349.5 294.3M1498.2 691.1L1361.2 293.1M1510.8 689.6L1372.8 291.8M1536.0 686.5L1395.9 289.4M1548.6 685.0L1407.5 288.1M1561.2 683.5L1419.1 286.9M1573.8 681.9L1430.6 285.6M1598.9 678.9L1453.7 283.2M1611.4 677.4L1465.3 281.9M1623.9 675.9L1476.8 280.7M1636.4 674.3L1488.3 279.5M1661.4 671.3L1511.3 277.0M1673.9 669.8L1522.8 275.8M1686.4 668.3L1534.3 274.5M1698.9 666.8L1545.7 273.3M1723.7 663.7L1568.6 270.9M1736.2 662.2L1580.1 269.6M1748.6 660.7L1591.5 268.4M1761.0 659.2L1602.9 267.2M1785.8 656.2L1625.8 264.7M1798.2 654.7L1637.2 263.5M1810.5 653.2L1648.5 262.3M1822.9 651.7L1659.9 261.1M1847.5 648.7L1682.6 258.6M1859.9 647.2L1694.0 257.4M1872.2 645.7L1705.3 256.2M1884.5 644.2L1716.7 255.0M1909.0 641.2L1739.3 252.6M1921.3 639.7L1750.6 251.3M1933.6 638.2L1761.9 250.1M1945.8 636.8L1773.2 248.9M1970.3 633.8L1795.7 246.5M1982.5 632.3L1807.0 245.3M1994.7 630.8L1818.3 244.1M2006.9 629.3L1829.5 242.9M205.2 848.2L2019.1 627.9M204.5 838.4L2015.0 619.1M203.9 828.7L2011.0 610.4M203.2 819.0L2007.0 601.7M202.0 799.7L1999.0 584.4M201.3 790.2L1995.0 575.8M200.7 780.6L1991.1 567.2M200.1 771.1L1987.1 558.7M198.9 752.3L1979.3 541.7M198.2 742.9L1975.4 533.3M197.6 733.5L1971.5 524.9M197.0 724.2L1967.6 516.5M195.8 705.7L1959.9 499.8M195.2 696.5L1956.1 491.5M194.6 687.3L1952.3 483.3M194.0 678.2L1948.5 475.1M192.8 660.1L1941.0 458.7M192.2 651.0L1937.2 450.6M191.6 642.1L1933.5 442.5M191.0 633.1L1929.7 434.4M189.8 615.3L1922.3 418.3M189.3 606.5L1918.6 410.3M188.7 597.6L1915.0 402.4M188.1 588.9L1911.3 394.5M187.0 571.4L1904.0 378.7M186.4 562.7L1900.4 370.8M185.8 554.1L1896.8 363.0M185.3 545.4L1893.2 355.2M184.1 528.3L1886.0 339.7M183.6 519.8L1882.5 332.0M183.0 511.3L1878.9 324.4M182.5 502.9L1875.4 316.7M181.3 486.0L1868.4 301.5M180.8 477.7L1864.9 293.9M180.3 469.4L1861.4 286.4M179.7 461.1L1857.9 278.9M178.6 444.6L1851.0 263.9M178.1 436.3L1847.6 256.5M177.5 428.2L1844.1 249.1M177.0 420.0L1840.7 241.7" stroke="#8c8c8c" stroke-width="0.9" fill="none"/><path d="M205.2 848.2L177.0 420.0M273.9 839.8L239.8 413.3M342.4 831.5L302.2 406.6M410.5 823.2L364.5 399.9M478.3 815.0L426.4 393.3M545.9 806.8L488.2 386.7M613.1 798.6L549.6 380.1M680.0 790.5L610.8 373.5M746.6 782.4L671.8 367.0M813.0 774.4L732.5 360.5M879.0 766.3L793.0 354.0M944.7 758.3L853.2 347.5M1010.2 750.4L913.2 341.1M1075.3 742.5L972.9 334.7M1140.2 734.6L1032.4 328.3M1204.8 726.8L1091.6 322.0M1269.1 719.0L1150.7 315.7M1333.1 711.2L1209.4 309.4M1396.8 703.4L1268.0 303.1M1460.2 695.7L1326.3 296.8M1523.4 688.1L1384.4 290.6M1586.3 680.4L1442.2 284.4M1649.0 672.8L1499.8 278.2M1711.3 665.2L1557.2 272.1M1773.4 657.7L1614.4 266.0M1835.2 650.2L1671.3 259.8M1896.8 642.7L1728.0 253.8M1958.1 635.3L1784.5 247.7M2019.1 627.9L1840.7 241.7M202.6 809.3L2003.0 593.0M199.5 761.7L1983.2 550.2M196.4 714.9L1963.8 508.1M193.4 669.1L1944.7 466.9M190.4 624.2L1926.0 426.3M187.5 580.1L1907.6 386.6M184.7 536.9L1889.6 347.5M181.9 494.4L1871.9 309.1M179.2 452.8L1854.4 271.4" stroke="#6c6c6c" stroke-width="1.2" fill="none"/></g></g>
<ellipse cx="1451" cy="303" rx="84" ry="52" fill="none" stroke="#f08406" stroke-width="4"/>
<path fill="url(#cyl)" d="M1402.5 444A84.5 53 0 0 1 1571.5 444L1571.5 499A84.5 53 0 0 1 1402.5 499Z"/>
<ellipse cx="1487" cy="444" rx="78.5" ry="48" fill="url(#cylin)"/>
<clipPath id="rc1487"><ellipse cx="1487" cy="444" rx="78.5" ry="48"/></clipPath>
<g clip-path="url(#rc1487)"><clipPath id="rc1487b"><ellipse cx="1487" cy="504" rx="78.5" ry="48"/></clipPath><g clip-path="url(#rc1487b)"><rect x="1402.5" y="391" width="169.0" height="166" fill="#a4a4a4"/><path d="M218.9 846.5L189.6 418.7M232.7 844.8L202.1 417.3M246.5 843.2L214.7 416.0M260.2 841.5L227.2 414.6M287.6 838.2L252.3 412.0M301.3 836.5L264.8 410.6M315.0 834.8L277.3 409.3M328.7 833.2L289.8 407.9M356.0 829.8L314.7 405.3M369.7 828.2L327.2 403.9M383.3 826.5L339.6 402.6M396.9 824.9L352.0 401.3M424.1 821.6L376.9 398.6M437.7 819.9L389.3 397.3M451.2 818.3L401.7 395.9M464.8 816.6L414.1 394.6M491.9 813.3L438.8 392.0M505.4 811.7L451.2 390.6M518.9 810.1L463.5 389.3M532.4 808.4L475.8 388.0M559.3 805.2L500.5 385.4M572.8 803.5L512.8 384.0M586.2 801.9L525.1 382.7M599.7 800.3L537.3 381.4M626.5 797.0L561.9 378.8M639.9 795.4L574.1 377.5M653.3 793.7L586.4 376.1M666.7 792.1L598.6 374.8M693.4 788.9L623.0 372.2M706.7 787.3L635.2 370.9M720.0 785.6L647.4 369.6M733.3 784.0L659.6 368.3M759.9 780.8L684.0 365.7M773.2 779.2L696.1 364.4M786.5 777.6L708.3 363.1M799.7 776.0L720.4 361.8M826.2 772.7L744.6 359.2M839.4 771.1L756.7 357.9M852.6 769.5L768.8 356.6M865.8 767.9L780.9 355.3M892.2 764.7L805.0 352.7M905.3 763.1L817.1 351.4M918.5 761.5L829.1 350.1M931.6 759.9L841.2 348.8M957.8 756.8L865.2 346.3M970.9 755.2L877.2 345.0M984.0 753.6L889.2 343.7M997.1 752.0L901.2 342.4M1023.2 748.8L925.1 339.8M1036.3 747.2L937.1 338.5M1049.3 745.6L949.0 337.3M1062.3 744.1L961.0 336.0M1088.3 740.9L984.8 333.4M1101.3 739.3L996.7 332.2M1114.3 737.8L1008.6 330.9M1127.2 736.2L1020.5 329.6M1153.1 733.0L1044.3 327.1M1166.0 731.5L1056.1 325.8M1179.0 729.9L1068.0 324.5M1191.9 728.3L1079.8 323.3M1217.6 725.2L1103.5 320.7M1230.5 723.6L1115.3 319.4M1243.4 722.1L1127.1 318.2M1256.2 720.5L1138.9 316.9M1281.9 717.4L1162.4 314.4M1294.7 715.8L1174.2 313.1M1307.5 714.3L1186.0 311.9M1320.3 712.7L1197.7 310.6M1345.8 709.6L1221.2 308.1M1358.6 708.1L1232.9 306.8M1371.3 706.5L1244.6 305.6M1384.1 705.0L1256.3 304.3M1409.5 701.9L1279.7 301.8M1422.2 700.4L1291.3 300.6M1434.9 698.8L1303.0 299.3M1447.6 697.3L1314.6 298.1M1472.9 694.2L1337.9 295.6M1485.6 692.7L1349.5 294.3M1498.2 691.1L1361.2 293.1M1510.8 689.6L1372.8 291.8M1536.0 686.5L1395.9 289.4M1548.6 685.0L1407.5 288.1M1561.2 683.5L1419.1 286.9M1573.8 681.9L1430.6 285.6M1598.9 678.9L1453.7 283.2M1611.4 677.4L1465.3 281.9M1623.9 675.9L1476.8 280.7M1636.4 674.3L1488.3 279.5M1661.4 671.3L1511.3 277.0M1673.9 669.8L1522.8 275.8M1686.4 668.3L1534.3 274.5M1698.9 666.8L1545.7 273.3M1723.7 663.7L1568.6 270.9M1736.2 662.2L1580.1 269.6M1748.6 660.7L1591.5 268.4M1761.0 659.2L1602.9 267.2M1785.8 656.2L1625.8 264.7M1798.2 654.7L1637.2 263.5M1810.5 653.2L1648.5 262.3M1822.9 651.7L1659.9 261.1M1847.5 648.7L1682.6 258.6M1859.9 647.2L1694.0 257.4M1872.2 645.7L1705.3 256.2M1884.5 644.2L1716.7 255.0M1909.0 641.2L1739.3 252.6M1921.3 639.7L1750.6 251.3M1933.6 638.2L1761.9 250.1M1945.8 636.8L1773.2 248.9M1970.3 633.8L1795.7 246.5M1982.5 632.3L1807.0 245.3M1994.7 630.8L1818.3 244.1M2006.9 629.3L1829.5 242.9M205.2 848.2L2019.1 627.9M204.5 838.4L2015.0 619.1M203.9 828.7L2011.0 610.4M203.2 819.0L2007.0 601.7M202.0 799.7L1999.0 584.4M201.3 790.2L1995.0 575.8M200.7 780.6L1991.1 567.2M200.1 771.1L1987.1 558.7M198.9 752.3L1979.3 541.7M198.2 742.9L1975.4 533.3M197.6 733.5L1971.5 524.9M197.0 724.2L1967.6 516.5M195.8 705.7L1959.9 499.8M195.2 696.5L1956.1 491.5M194.6 687.3L1952.3 483.3M194.0 678.2L1948.5 475.1M192.8 660.1L1941.0 458.7M192.2 651.0L1937.2 450.6M191.6 642.1L1933.5 442.5M191.0 633.1L1929.7 434.4M189.8 615.3L1922.3 418.3M189.3 606.5L1918.6 410.3M188.7 597.6L1915.0 402.4M188.1 588.9L1911.3 394.5M187.0 571.4L1904.0 378.7M186.4 562.7L1900.4 370.8M185.8 554.1L1896.8 363.0M185.3 545.4L1893.2 355.2M184.1 528.3L1886.0 339.7M183.6 519.8L1882.5 332.0M183.0 511.3L1878.9 324.4M182.5 502.9L1875.4 316.7M181.3 486.0L1868.4 301.5M180.8 477.7L1864.9 293.9M180.3 469.4L1861.4 286.4M179.7 461.1L1857.9 278.9M178.6 444.6L1851.0 263.9M178.1 436.3L1847.6 256.5M177.5 428.2L1844.1 249.1M177.0 420.0L1840.7 241.7" stroke="#8c8c8c" stroke-width="0.9" fill="none"/><path d="M205.2 848.2L177.0 420.0M273.9 839.8L239.8 413.3M342.4 831.5L302.2 406.6M410.5 823.2L364.5 399.9M478.3 815.0L426.4 393.3M545.9 806.8L488.2 386.7M613.1 798.6L549.6 380.1M680.0 790.5L610.8 373.5M746.6 782.4L671.8 367.0M813.0 774.4L732.5 360.5M879.0 766.3L793.0 354.0M944.7 758.3L853.2 347.5M1010.2 750.4L913.2 341.1M1075.3 742.5L972.9 334.7M1140.2 734.6L1032.4 328.3M1204.8 726.8L1091.6 322.0M1269.1 719.0L1150.7 315.7M1333.1 711.2L1209.4 309.4M1396.8 703.4L1268.0 303.1M1460.2 695.7L1326.3 296.8M1523.4 688.1L1384.4 290.6M1586.3 680.4L1442.2 284.4M1649.0 672.8L1499.8 278.2M1711.3 665.2L1557.2 272.1M1773.4 657.7L1614.4 266.0M1835.2 650.2L1671.3 259.8M1896.8 642.7L1728.0 253.8M1958.1 635.3L1784.5 247.7M2019.1 627.9L1840.7 241.7M202.6 809.3L2003.0 593.0M199.5 761.7L1983.2 550.2M196.4 714.9L1963.8 508.1M193.4 669.1L1944.7 466.9M190.4 624.2L1926.0 426.3M187.5 580.1L1907.6 386.6M184.7 536.9L1889.6 347.5M181.9 494.4L1871.9 309.1M179.2 452.8L1854.4 271.4" stroke="#6c6c6c" stroke-width="1.2" fill="none"/></g></g>
<ellipse cx="1487" cy="444" rx="82.5" ry="51" fill="none" stroke="#f08406" stroke-width="4"/>
<path fill="#c86a00" d="M1589.6 85.8C1595.3 84.0 1603.3 92.9 1610.0 100.0C1616.7 107.1 1621.4 111.1 1630.0 128.6C1638.6 146.1 1652.7 180.3 1661.7 205.0C1670.7 229.7 1678.4 253.0 1684.0 277.0C1689.6 301.0 1693.2 329.4 1695.5 349.0C1697.8 368.6 1699.6 378.7 1697.7 394.5C1695.8 410.3 1690.3 431.1 1684.0 444.0C1677.7 456.9 1669.0 463.0 1660.0 472.0C1651.0 481.0 1635.0 493.7 1630.0 498.0C1626.3 495.0 1611.3 483.0 1607.6 480.0C1606.3 476.7 1603.8 471.2 1600.0 460.0C1596.2 448.8 1590.5 431.7 1585.0 412.5C1579.5 393.3 1570.0 356.2 1567.0 345.0C1564.8 344.2 1555.8 340.8 1553.5 340.0C1554.2 325.0 1555.8 280.0 1558.0 250.0C1560.2 220.0 1564.0 183.2 1567.0 160.0C1570.0 136.8 1572.2 123.0 1576.0 110.6C1579.8 98.2 1583.9 87.6 1589.6 85.8Z" />
<path fill="#a65400" d="M1622.0 150.0C1625.7 154.8 1635.3 162.0 1644.0 179.0C1652.7 196.0 1666.2 228.3 1674.0 252.0C1681.8 275.7 1687.0 299.5 1691.0 321.0C1695.0 342.5 1697.7 361.7 1697.7 381.0C1697.7 400.3 1695.6 421.2 1691.0 437.0C1686.4 452.8 1680.7 465.4 1670.0 475.7C1659.3 486.0 1634.2 495.1 1627.0 499.0C1629.8 483.7 1640.5 440.8 1644.0 407.0C1647.5 373.2 1649.7 330.5 1648.0 296.0C1646.3 261.5 1638.3 224.3 1634.0 200.0C1629.7 175.7 1624.0 158.3 1622.0 150.0Z" />
<path fill="#b05800" d="M1628.0 276.0L1641.0 278.0L1636.0 360.0L1624.0 480.0L1610.0 482.0L1618.0 380.0Z" />
<path fill="#d07200" d="M1609.0 482.0L1618.0 380.0L1628.0 276.0L1620.0 300.0L1606.0 420.0L1602.0 470.0Z" />
<path fill="#b45c00" d="M1574.0 127.0L1588.0 128.0L1580.0 200.0L1567.0 330.0L1562.0 340.0L1553.5 340.0L1558.0 250.0L1567.0 160.0Z" />
<rect x="1573" y="126" width="13" height="9" fill="#f08a10"/>
<rect x="1630" y="271" width="12" height="9" fill="#f08a10"/>
<path fill="#cf6e00" d="M1778.8 126.3C1784.8 126.3 1790.1 144.6 1796.9 160.0C1803.7 175.4 1813.8 196.1 1819.4 218.7C1825.0 241.2 1828.4 267.5 1830.7 295.3C1833.0 323.1 1833.8 360.7 1833.0 385.5C1832.2 410.3 1827.2 434.2 1826.0 444.0C1826.2 445.3 1826.8 450.7 1827.0 452.0C1810.8 447.5 1746.2 429.5 1730.0 425.0C1726.8 419.9 1717.2 408.7 1711.0 394.5C1704.8 380.3 1695.2 358.1 1693.0 340.0C1690.8 321.9 1693.2 305.5 1697.7 286.0C1702.2 266.5 1709.5 244.0 1720.0 223.0C1730.5 202.0 1751.0 176.1 1760.8 160.0C1770.6 143.9 1772.8 126.3 1778.8 126.3Z" />
<path fill="#ca6a00" d="M1692.0 306.0C1695.2 320.8 1702.3 372.3 1711.0 394.5C1719.7 416.7 1738.5 431.6 1744.0 439.0C1757.8 441.2 1813.2 449.8 1827.0 452.0C1828.0 440.9 1840.8 397.5 1833.0 385.5C1825.2 373.5 1798.8 384.2 1780.0 380.0C1761.2 375.8 1734.7 372.3 1720.0 360.0C1705.3 347.7 1696.7 315.0 1692.0 306.0Z" />
<path fill="#a05000" d="M1760.0 158.0L1798.0 160.0L1745.0 260.0L1713.0 318.0L1735.0 230.0Z" />
<path d="M1760 160L1799 160" stroke="#f08a10" stroke-width="5"/>
<path fill="url(#cyl)" d="M1443.5 537A82.5 55.6 0 0 1 1608.5 537L1606.5 602A81.5 55.6 0 0 1 1441.5 602Z"/>
<ellipse cx="1526" cy="537" rx="82.5" ry="55.6" fill="#ec8208"/>
<path fill="#a04e00" d="M1551.3 556.3L1598.6 550.7Q1596.9 560.8 1583.7 569.0L1549.2 559.3Z"/>
<path fill="#a04e00" d="M1540.9 565.0L1572.4 576.1Q1562.2 583.8 1544.1 585.1L1536.6 566.6Z"/>
<path fill="#a04e00" d="M1524.8 568.0L1528.6 586.6Q1513.7 589.0 1497.6 583.0L1520.0 567.5Z"/>
<path fill="#a04e00" d="M1509.1 564.1L1483.7 578.1Q1469.9 574.2 1461.9 563.2L1505.6 561.8Z"/>
<path fill="#a04e00" d="M1500.0 554.8L1455.0 553.9Q1447.5 545.3 1450.7 533.4L1499.1 551.6Z"/>
<path fill="#a04e00" d="M1500.7 543.7L1453.4 523.3Q1455.1 513.2 1468.3 505.0L1502.8 540.7Z"/>
<path fill="#a04e00" d="M1511.1 535.0L1479.6 497.9Q1489.8 490.2 1507.9 488.9L1515.4 533.4Z"/>
<path fill="#a04e00" d="M1527.2 532.0L1523.4 487.4Q1538.3 485.0 1554.4 491.0L1532.0 532.5Z"/>
<path fill="#a04e00" d="M1542.9 535.9L1568.3 495.9Q1582.1 499.8 1590.1 510.8L1546.4 538.2Z"/>
<path fill="#a04e00" d="M1552.0 545.2L1597.0 520.1Q1604.5 528.7 1601.3 540.6L1552.9 548.4Z"/>
<ellipse cx="1526" cy="550" rx="26" ry="17" fill="#ec8208"/>
<ellipse cx="1526" cy="550" rx="21" ry="13.5" fill="none" stroke="#d47000" stroke-width="1"/>
<ellipse cx="1526" cy="550" rx="4" ry="2.6" fill="#9a4800"/>
<path fill="url(#cyl)" d="M1690 486A79 52 0 0 1 1848 486L1846 526A78 52 0 0 1 1688 526Z"/>
<ellipse cx="1769" cy="486" rx="79" ry="52" fill="#ec8208"/>
<path fill="#a04e00" d="M1794.3 495.3L1838.2 498.7Q1836.8 508.2 1824.1 515.6L1792.2 498.3Z"/>
<path fill="#a04e00" d="M1783.9 504.0L1813.3 522.3Q1803.6 529.6 1786.3 530.7L1779.6 505.6Z"/>
<path fill="#a04e00" d="M1767.8 507.0L1771.5 532.0Q1757.2 534.4 1741.9 528.6L1763.0 506.5Z"/>
<path fill="#a04e00" d="M1752.1 503.1L1728.7 524.1Q1715.3 520.7 1707.9 510.3L1748.6 500.8Z"/>
<path fill="#a04e00" d="M1743.0 493.8L1701.3 501.7Q1694.0 493.7 1697.2 482.7L1742.1 490.6Z"/>
<path fill="#a04e00" d="M1743.7 482.7L1699.8 473.3Q1701.2 463.8 1713.9 456.4L1745.8 479.7Z"/>
<path fill="#a04e00" d="M1754.1 474.0L1724.7 449.7Q1734.4 442.4 1751.7 441.3L1758.4 472.4Z"/>
<path fill="#a04e00" d="M1770.2 471.0L1766.5 440.0Q1780.8 437.6 1796.1 443.4L1775.0 471.5Z"/>
<path fill="#a04e00" d="M1785.9 474.9L1809.3 447.9Q1822.7 451.3 1830.1 461.7L1789.4 477.2Z"/>
<path fill="#a04e00" d="M1795.0 484.2L1836.7 470.3Q1844.0 478.3 1840.8 489.3L1795.9 487.4Z"/>
<ellipse cx="1769" cy="489" rx="26" ry="17" fill="#ec8208"/>
<ellipse cx="1769" cy="489" rx="21" ry="13.5" fill="none" stroke="#d47000" stroke-width="1"/>
<ellipse cx="1769" cy="489" rx="4" ry="2.6" fill="#9a4800"/>
<path d="M305 418L1827 250" stroke="#b8b8b8" stroke-width="1.1" fill="none"/>
</svg>

<!-- toolbar -->
<div class="a" style="left:1885px;top:23px;width:35px;height:974px;background:#fff"></div>
<div class="a" style="left:1886px;top:24px;width:34px;height:972px;background:#f0f0f0"></div>
<div class="a" style="left:1885px;top:996px;width:35px;height:1px;background:#a0a0a0"></div>
<div class="a tbsel" style="left:1887px;top:33px;width:31px;height:29px"></div>
<div class="a tbsel" style="left:1887px;top:285px;width:31px;height:29px"></div>
<div class="a tbsel" style="left:1887px;top:315px;width:31px;height:29px"></div>
<svg class="a" style="left:1886px;top:24px" width="34" height="500" viewBox="1886 24 34 500"><rect x="1889" y="27" width="2" height="2" fill="#a8a8a8"/><rect x="1893" y="27" width="2" height="2" fill="#a8a8a8"/><rect x="1897" y="27" width="2" height="2" fill="#a8a8a8"/><rect x="1901" y="27" width="2" height="2" fill="#a8a8a8"/><rect x="1905" y="27" width="2" height="2" fill="#a8a8a8"/><rect x="1909" y="27" width="2" height="2" fill="#a8a8a8"/><rect x="1913" y="27" width="2" height="2" fill="#a8a8a8"/><path d="M1896 38L1911.5 46.5L1905.5 48.5L1909.5 54.5L1906.5 56.5L1902.5 50.5L1898 54.5Z" fill="#505050"/><g fill="#505050"><path d="M1902 67L1905.5 71L1903 71L1903 75L1901 75L1901 71L1898.5 71Z"/><path d="M1902 89L1905.5 85L1903 85L1903 81L1901 81L1901 85L1898.5 85Z"/><path d="M1891 78L1895 74.5L1895 77L1899 77L1899 79L1895 79L1895 81.5Z"/><path d="M1913 78L1909 74.5L1909 77L1905 77L1905 79L1909 79L1909 81.5Z"/></g><rect x="1900.5" y="76.5" width="3" height="3" fill="#9a9a9a"/><rect x="1894.5" y="99.5" width="19" height="13" fill="none" stroke="#505050" stroke-width="1.3"/><rect x="1890.8" y="108.8" width="8.4" height="7.4" fill="#f0f0f0" stroke="#959595" stroke-width="1.2"/><path d="M1902 108.5L1908.5 103" stroke="#505050" stroke-width="1.8"/><path d="M1905 102L1910.5 101.5L1910 107Z" fill="#505050"/><path d="M1892.5 136A10 10 0 0 1 1912 137.5" stroke="#555" stroke-width="2.8" fill="none"/><path d="M1891 139.5L1891.5 132L1897.5 135.5Z" fill="#555"/><path d="M1912 140.5A10 10 0 0 1 1892.3 140" stroke="#8a8a8a" stroke-width="2.8" fill="none"/><path d="M1913 136.5L1912.5 144L1906.5 140.5Z" fill="#8a8a8a"/><path d="M1890 155.5L1915 155.5" stroke="#cfd5d9" stroke-width="1"/><path d="M1890 281.5L1915 281.5" stroke="#cfd5d9" stroke-width="1"/><path d="M1890 407.5L1915 407.5" stroke="#cfd5d9" stroke-width="1"/><path d="M1890 443.5L1915 443.5" stroke="#cfd5d9" stroke-width="1"/><polygon points="1891,165 1900,163 1913,164.8 1904,167.5" fill="#6f93b3"/><polygon points="1891,165 1904,167.5 1903.5,185 1892,179.5" fill="#7598b8"/><polygon points="1904,167.5 1913,164.8 1912.3,181.2 1903.5,185" fill="#5f84a4"/><polygon points="1891,195 1900,193 1913,194.8 1904,197.5" fill="#6f93b3"/><polygon points="1891,195 1904,197.5 1903.5,215 1892,209.5" fill="#c4c4c4"/><polygon points="1904,197.5 1913,194.8 1912.3,211.2 1903.5,215" fill="#8f8f8f"/><polygon points="1891,225 1900,223 1913,224.8 1904,227.5" fill="#a9a9a9"/><polygon points="1891,225 1904,227.5 1903.5,245 1892,239.5" fill="#7598b8"/><polygon points="1904,227.5 1913,224.8 1912.3,241.2 1903.5,245" fill="#8f8f8f"/><polygon points="1891,255 1900,253 1913,254.8 1904,257.5" fill="#a9a9a9"/><polygon points="1891,255 1904,257.5 1903.5,275 1892,269.5" fill="#c4c4c4"/><polygon points="1904,257.5 1913,254.8 1912.3,271.2 1903.5,275" fill="#5f84a4"/><path d="M1898.8 305.5L1898.8 292" stroke="#1010f0" stroke-width="1.6"/><path d="M1896.8 293L1898.8 289L1900.8 293Z" fill="#1010f0"/><path d="M1898.8 305.5L1907.5 300.5" stroke="#10d010" stroke-width="1.6"/><path d="M1906 299L1910 299.5L1908 302.5Z" fill="#10d010"/><path d="M1898.8 305.5L1909.5 310" stroke="#e03010" stroke-width="1.6"/><path d="M1908 308L1912 311L1907.5 312Z" fill="#e03010"/><polygon points="1891.9,322.5 1902.5,319.8 1914,321.9 1904.5,324.5" fill="#a8a8a8"/><polygon points="1891.9,322.5 1904.5,324.5 1905,341.9 1893.1,337.5" fill="#b4b4b4"/><polygon points="1904.5,324.5 1914,321.9 1913.1,335.6 1905,341.9" fill="#8c8c8c"/><g fill="none" stroke="#404040" stroke-width="0.9"><polygon points="1891,351 1901.5,348.8 1913,351 1903,353.5"/><polygon points="1891,351 1903,353.5 1903.5,370.5 1892,366"/><polygon points="1903,353.5 1913,351 1912.5,365 1903.5,370.5"/><path d="M1901.5 348.8L1901.5 363L1892 366M1901.5 363L1912.5 365"/></g><polygon points="1892.5,393 1911.9,394.4 1898.8,399.5" fill="#a0a0a0"/><path d="M1900 395L1901.5 383" stroke="#1010f0" stroke-width="1.6"/><path d="M1899.5 384L1902 379.5L1903.5 384.5Z" fill="#1010f0"/><polygon points="1891,417 1897,415.5 1897,436 1892,432" fill="#c0c0c0"/><polygon points="1897,415.5 1905.5,416 1905.5,434 1897,436" fill="#c07040"/><rect x="1898.5" y="419" width="2.5" height="12" fill="#903020"/><g fill="none" stroke="#404040" stroke-width="0.8"><path d="M1905.5 416L1913 417.5L1913 431.5L1905.5 436.5L1897 436M1905.5 416L1905.5 436.5M1897 415.5L1905.5 416"/></g><polygon points="1913.38,462.65 1913.18,464.14 1910.23,464.73 1909.79,465.79 1911.46,468.29 1910.55,469.48 1907.70,468.52 1906.79,469.22 1906.99,472.21 1905.60,472.79 1903.62,470.53 1902.48,470.68 1901.15,473.38 1899.66,473.18 1899.07,470.23 1898.01,469.79 1895.51,471.46 1894.32,470.55 1895.28,467.70 1894.58,466.79 1891.59,466.99 1891.01,465.60 1893.27,463.62 1893.12,462.48 1890.42,461.15 1890.62,459.66 1893.57,459.07 1894.01,458.01 1892.34,455.51 1893.25,454.32 1896.10,455.28 1897.01,454.58 1896.81,451.59 1898.20,451.01 1900.18,453.27 1901.32,453.12 1902.65,450.42 1904.14,450.62 1904.73,453.57 1905.79,454.01 1908.29,452.34 1909.48,453.25 1908.52,456.10 1909.22,457.01 1912.21,456.81 1912.79,458.20 1910.53,460.18 1910.68,461.32" fill="#6a6a6a"/><circle cx="1901.9" cy="461.9" r="6.2" fill="#f0f0f0"/><polygon points="1891.5,482.5 1896,481.8 1913,483 1913,487.5 1900,487.5 1900,496 1893,497.5" fill="#b4b4b4"/><polygon points="1896,481.8 1913,483 1909,484.5 1892,484" fill="#d0d0d0"/><rect x="1901.9" y="487.5" width="3.7" height="14" fill="#6f9ab8"/><rect x="1906.9" y="487.5" width="3.7" height="15" fill="#6f9ab8"/></svg>
</body></html>
